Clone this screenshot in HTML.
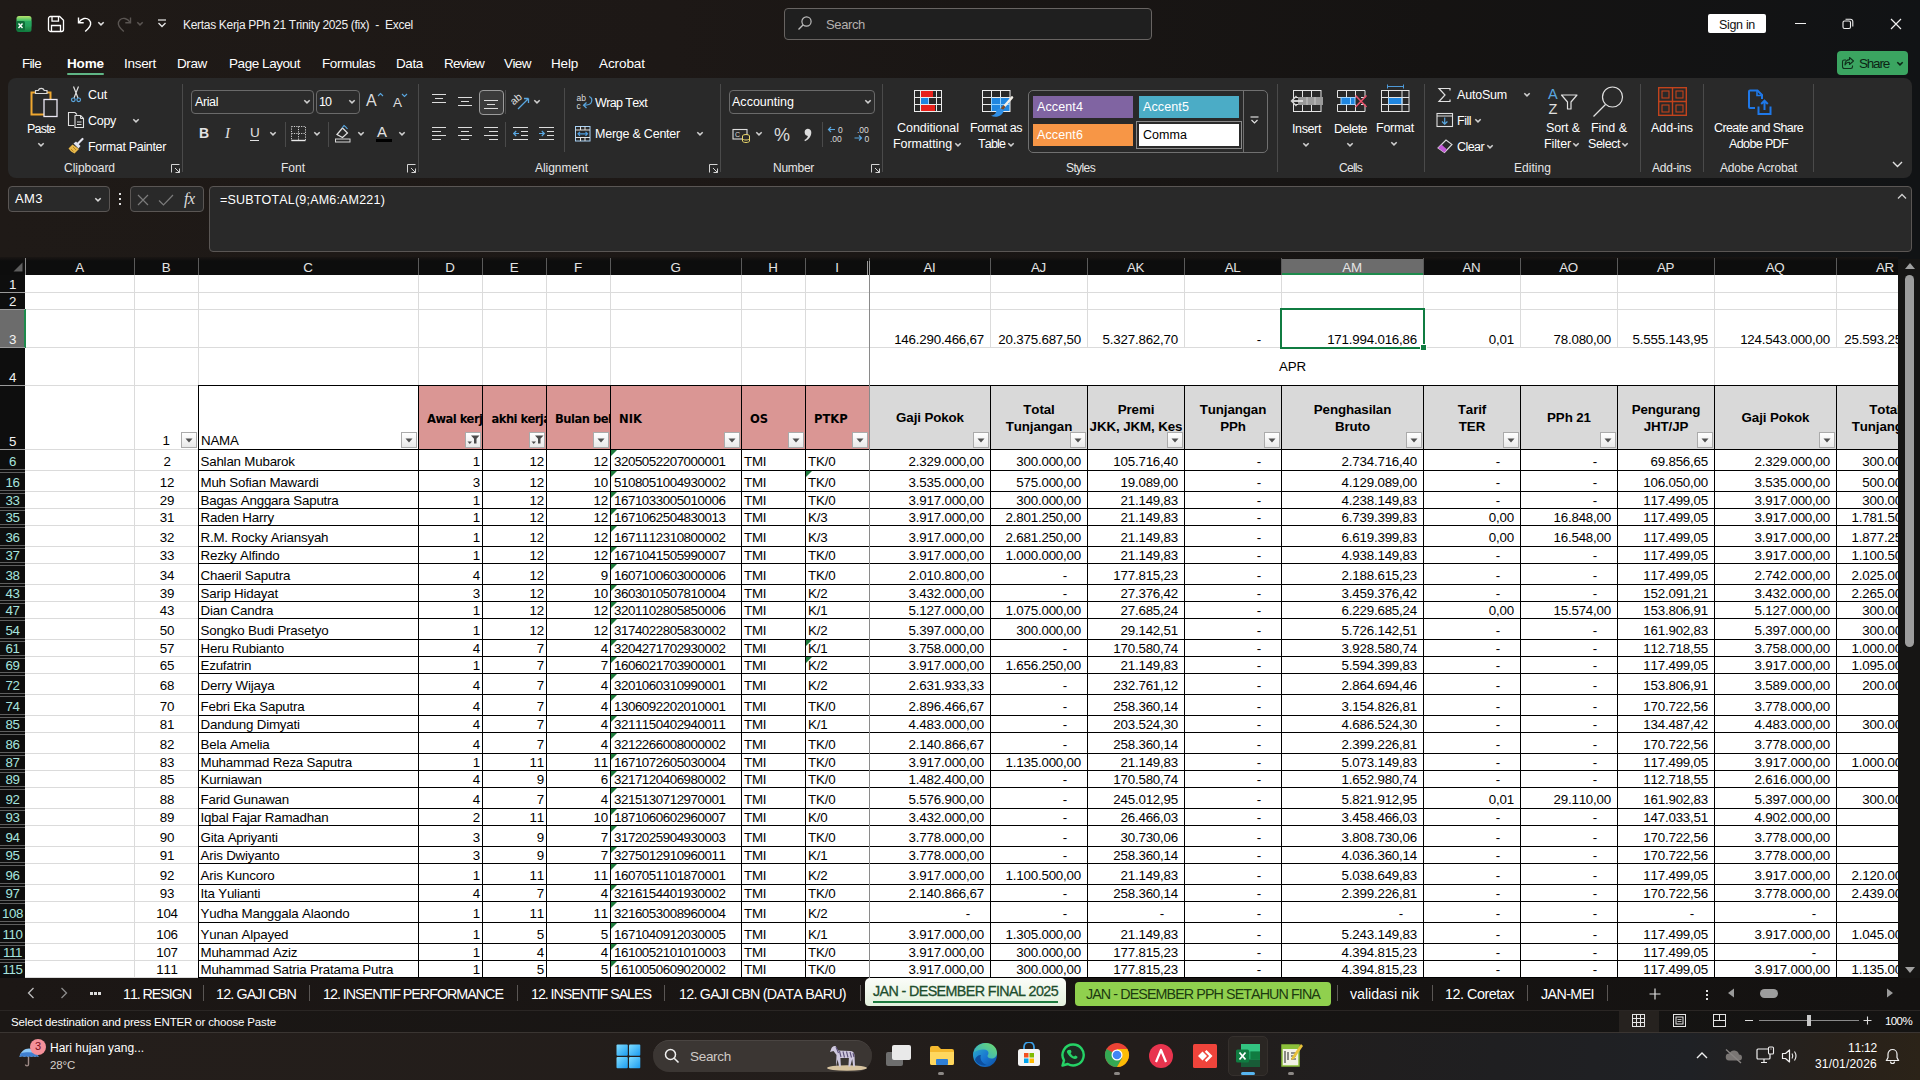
<!DOCTYPE html>
<html lang="en"><head><meta charset="utf-8"><title>Kertas Kerja PPh 21 Trinity 2025 (fix) - Excel</title>
<style>
html,body{margin:0;padding:0}
body{width:1920px;height:1080px;overflow:hidden;position:relative;background:#1a1614;font-family:"Liberation Sans",sans-serif;font-kerning:none}
.a{position:absolute;display:block}
.t{position:absolute;white-space:pre;font-family:"Liberation Sans",sans-serif}

#titlebg{position:absolute;left:0;top:0;width:1920px;height:275px;background:linear-gradient(90deg,#1f1a17 0%,#1d1816 35%,#151312 75%,#111315 100%)}
#ribbon{position:absolute;left:8px;top:78px;width:1904px;height:100px;background:#292929;border-radius:8px}

.ch{position:absolute;width:60px;height:16px;text-align:center;font:13.333px/16px "Liberation Sans",sans-serif;color:#e4e4e4;letter-spacing:-0.3px}
.rh{position:absolute;left:0;width:25px;height:16px;text-align:center;font:13.333px/16px "Liberation Sans",sans-serif;letter-spacing:-0.4px}
#tabbar{position:absolute;left:0;top:978px;width:1920px;height:32px;background:linear-gradient(90deg,#1c1715,#141211)}
#statusbar{position:absolute;left:0;top:1010px;width:1920px;height:22px;background:linear-gradient(90deg,#1b1715,#141312);border-top:1px solid #2a2624;box-sizing:border-box}
#taskbar{position:absolute;left:0;top:1032px;width:1920px;height:48px;background:linear-gradient(90deg,#241e1b 0%,#221d1b 60%,#1f1f21 78%,#1f2125 88%,#28211a 96%,#2b2318 100%);border-top:1px solid #3a3532;box-sizing:border-box}

#grid{position:absolute;left:0;top:0;width:1898px;height:978px;overflow:hidden;clip-path:inset(275px 0 0 25px);}
#gridbg{position:absolute;left:25px;top:275px;width:1873px;height:703px;background:#fff}
#grid i{position:absolute;display:block}
#grid .h{height:1px;background:#dbdbdb}
#grid .v{width:1px;background:#dbdbdb}
#grid .hb{height:1px;background:#000}
#grid .vb{width:1px;background:#000}
#grid .fz{width:1px;background:#8a8a8a}
#grid .c{position:absolute;white-space:nowrap;font:13.333px "Liberation Sans",sans-serif;color:#000;letter-spacing:-0.2px;font-kerning:none}
#grid .ctr{text-align:center}
#grid .r{text-align:right}
#grid .nik{letter-spacing:-0.45px}
#grid .hp{font:700 12.8px "DejaVu Sans Condensed","DejaVu Sans",sans-serif;letter-spacing:0;overflow:hidden;box-sizing:border-box}
#grid .hg{font-weight:700;text-align:center;letter-spacing:-0.1px;white-space:nowrap;overflow:hidden}
#grid .tri{width:0;height:0;border-top:6px solid #1e7a3c;border-right:6px solid transparent}
#grid .fb{position:absolute;width:14px;height:14px;border:1px solid #ababab;background:linear-gradient(#fff,#e9e9e9);display:block;line-height:0}
#grid .fb svg{position:absolute;left:-1px;top:-1px}
#sel{position:absolute;left:1280px;top:308px;width:141px;height:37px;border:2px solid #107c41}
#selh{left:1420px;top:344px;width:5px;height:5px;background:#107c41;border:1px solid #fff}
</style></head>
<body>
<div id="titlebg"></div>
<svg class="a" style="left:15px;top:15px" width="18" height="18" viewBox="0 0 18 18"><defs><linearGradient id="xg" x1="0" y1="0" x2="0" y2="1"><stop offset="0" stop-color="#b9e36c"/><stop offset=".3" stop-color="#3fc06a"/><stop offset="1" stop-color="#0f7a3e"/></linearGradient></defs><rect x="1.500" y="1" width="15" height="16" rx="2.500" fill="url(#xg)"/><rect x="9.500" y="6" width="7" height="5.500" fill="#21a35f" opacity=".7"/><rect x="1" y="6" width="9" height="9.500" rx="1.500" fill="#0e6e38"/><path d="M3.500 8.500 7.500 13M7.500 8.500 3.500 13" stroke="#fff" stroke-width="1.400"/></svg>
<svg class="a" style="left:47px;top:15px" width="18" height="18" viewBox="0 0 18 18"><path d="M1.5 3.5a2 2 0 0 1 2-2h9.2l3.8 3.8v9.2a2 2 0 0 1-2 2h-11a2 2 0 0 1-2-2z" fill="none" stroke="#fff" stroke-width="1.3"/><path d="M5 1.8v4.4h6.5V1.8M4.5 16v-5.5h9V16" fill="none" stroke="#fff" stroke-width="1.3"/></svg>
<svg class="a" style="left:76px;top:15px" width="18" height="18" viewBox="0 0 18 18"><path d="M2.5 2.5v5.2h5.2" fill="none" stroke="#fff" stroke-width="1.4"/><path d="M2.8 7.5C5.5 3 10.5 2.3 13.2 5c2.6 2.7 1.5 6.3-1.2 8.8l-2.8 2.6" fill="none" stroke="#fff" stroke-width="1.4"/></svg>
<svg class="a" style="left:97px;top:21px" width="8" height="6" viewBox="0 0 8 6"><path d="M1.3 1.2 4 3.900 6.700 1.2" fill="none" stroke="#e0e0e0" stroke-width="1.5"/></svg>
<svg class="a" style="left:115px;top:15px" width="18" height="18" viewBox="0 0 18 18"><path d="M15.5 2.5v5.2h-5.2" fill="none" stroke="#5a5552" stroke-width="1.4"/><path d="M15.2 7.5C12.5 3 7.5 2.3 4.8 5c-2.6 2.7-1.5 6.3 1.2 8.8l2.8 2.6" fill="none" stroke="#5a5552" stroke-width="1.4"/></svg>
<svg class="a" style="left:136px;top:21px" width="8" height="6" viewBox="0 0 8 6"><path d="M1.3 1.2 4 3.900 6.700 1.2" fill="none" stroke="#5a5552" stroke-width="1.5"/></svg>
<svg class="a" style="left:157px;top:19px" width="10" height="10" viewBox="0 0 10 10"><path d="M1 1h8" stroke="#e8e8e8" stroke-width="1.2"/><path d="M1.5 4 5 7.5 8.5 4" fill="none" stroke="#e8e8e8" stroke-width="1.3"/></svg>
<div class="t" style="left:183px;top:17.0px;font-size:12px;line-height:17px;color:#f0f0f0;letter-spacing:-0.31px;">Kertas Kerja PPh 21 Trinity 2025 (fix)  -  Excel</div>
<div class="a" style="left:784px;top:8px;width:366px;height:30px;border:1px solid #686462;border-radius:4px;background:#1f1f1f"></div>
<svg class="a" style="left:797px;top:15px" width="16" height="16" viewBox="0 0 16 16"><circle cx="9.5" cy="6.5" r="4.6" fill="none" stroke="#bdbdbd" stroke-width="1.2"/><path d="M6.2 9.8 1.5 14.5" stroke="#bdbdbd" stroke-width="1.3"/></svg>
<div class="t" style="left:826px;top:15.5px;font-size:13px;line-height:18px;color:#b4b0ae;letter-spacing:-0.37px;">Search</div>
<div class="a" style="left:1708px;top:14px;width:58px;height:19px;background:#fff;border-radius:2px"></div>
<div class="t" style="left:1719px;top:15.5px;font-size:12.5px;line-height:18px;color:#111;letter-spacing:-0.32px;">Sign in</div>
<i class="a" style="left:1795px;top:23px;width:11px;height:1px;background:#f0f0f0"></i>
<svg class="a" style="left:1842px;top:18px" width="12" height="12" viewBox="0 0 12 12"><rect x="1" y="3" width="7.5" height="7.5" rx="1.5" fill="none" stroke="#f0f0f0" stroke-width="1.1"/><path d="M3.5 1.2h5a2.3 2.3 0 0 1 2.3 2.3v5" fill="none" stroke="#f0f0f0" stroke-width="1.1"/></svg>
<svg class="a" style="left:1890px;top:18px" width="12" height="12" viewBox="0 0 12 12"><path d="M1 1 11 11M11 1 1 11" stroke="#f0f0f0" stroke-width="1.2"/></svg>
<div class="t" style="left:22px;top:53.5px;font-size:13.5px;line-height:19px;color:#ffffff;letter-spacing:-0.69px;">File</div>
<div class="t" style="left:67px;top:53.5px;font-size:13.5px;line-height:19px;color:#ffffff;letter-spacing:-0.13px;font-weight:700;">Home</div>
<div class="t" style="left:124px;top:53.5px;font-size:13.5px;line-height:19px;color:#ffffff;letter-spacing:-0.29px;">Insert</div>
<div class="t" style="left:177px;top:53.5px;font-size:13.5px;line-height:19px;color:#ffffff;letter-spacing:-0.38px;">Draw</div>
<div class="t" style="left:229px;top:53.5px;font-size:13.5px;line-height:19px;color:#ffffff;letter-spacing:-0.44px;">Page Layout</div>
<div class="t" style="left:322px;top:53.5px;font-size:13.5px;line-height:19px;color:#ffffff;letter-spacing:-0.41px;">Formulas</div>
<div class="t" style="left:396px;top:53.5px;font-size:13.5px;line-height:19px;color:#ffffff;letter-spacing:-0.38px;">Data</div>
<div class="t" style="left:444px;top:53.5px;font-size:13.5px;line-height:19px;color:#ffffff;letter-spacing:-0.71px;">Review</div>
<div class="t" style="left:504px;top:53.5px;font-size:13.5px;line-height:19px;color:#ffffff;letter-spacing:-0.57px;">View</div>
<div class="t" style="left:551px;top:53.5px;font-size:13.5px;line-height:19px;color:#ffffff;letter-spacing:-0.19px;">Help</div>
<div class="t" style="left:599px;top:53.5px;font-size:13.5px;line-height:19px;color:#ffffff;letter-spacing:-0.08px;">Acrobat</div>
<i class="a" style="left:67px;top:73px;width:37px;height:2px;background:#5fb585;border-radius:1px"></i>
<div class="a" style="left:1837px;top:51px;width:71px;height:24px;background:#3ba561;border-radius:4px"></div>
<svg class="a" style="left:1841px;top:56px" width="14" height="14" viewBox="0 0 14 14"><path d="M5 4H3.2A1.7 1.7 0 0 0 1.5 5.7v5.1a1.7 1.7 0 0 0 1.7 1.7h6.6a1.7 1.7 0 0 0 1.7-1.7V9.5" fill="none" stroke="#10301c" stroke-width="1.1"/><path d="M8.5 1.5 12.5 5l-4 3.5V6.3C6 6.3 4.8 7.2 4 9c0-3 1.6-5.2 4.5-5.4z" fill="none" stroke="#10301c" stroke-width="1.1" stroke-linejoin="round"/></svg>
<div class="t" style="left:1859px;top:53.5px;font-size:13.5px;line-height:19px;color:#0c2415;letter-spacing:-1.20px;">Share</div>
<svg class="a" style="left:1896px;top:61px" width="8" height="6" viewBox="0 0 8 6"><path d="M1.3 1.2 4 3.900 6.700 1.2" fill="none" stroke="#0c2415" stroke-width="1.5"/></svg>
<div id="ribbon"></div>
<svg class="a" style="left:27px;top:86px" width="32" height="34" viewBox="0 0 32 34"><path d="M17 28.500H4.500V6.500H23.500V13.500" fill="none" stroke="#f0a830" stroke-width="2"/><path d="M8.500 7.500V4.500h2.700a3.300 3.300 0 0 1 6.100 0H20v3z" fill="#292929" stroke="#d8d8d8" stroke-width="1.200"/><rect x="17" y="13.500" width="13" height="17" fill="#292929" stroke="#ece8f4" stroke-width="1.300"/></svg>
<div class="t" style="left:27px;top:119.5px;font-size:12.5px;line-height:18px;color:#ffffff;letter-spacing:-0.79px;">Paste</div>
<svg class="a" style="left:37px;top:142px" width="8" height="6" viewBox="0 0 8 6"><path d="M1.3 1.2 4 3.900 6.700 1.2" fill="none" stroke="#d0d0d0" stroke-width="1.5"/></svg>
<svg class="a" style="left:69px;top:86px" width="14" height="17" viewBox="0 0 14 17"><path d="M4.500 .500 9 12M9.500 .500 5 12" stroke="#e0e0e0" stroke-width="1.200" fill="none"/><circle cx="4.300" cy="13.800" r="1.800" fill="none" stroke="#5aa7e0" stroke-width="1.200"/><circle cx="9.700" cy="13.800" r="1.800" fill="none" stroke="#5aa7e0" stroke-width="1.200"/></svg>
<div class="t" style="left:88px;top:85.5px;font-size:12.5px;line-height:18px;color:#ffffff;letter-spacing:-0.15px;">Cut</div>
<svg class="a" style="left:67px;top:111px" width="18" height="18" viewBox="0 0 18 18"><path d="M7 14.500H1.500V1.500h6.500l2 2" fill="none" stroke="#e0e0e0" stroke-width="1.100"/><path d="M8 4.500h5.500l3 3V16.500H8z" fill="#292929" stroke="#e0e0e0" stroke-width="1.100" stroke-linejoin="round"/><path d="M13.500 4.500v3h3" fill="none" stroke="#e0e0e0" stroke-width="1"/><path d="M10 11h4.500M10 13.500h4.500" stroke="#e0e0e0" stroke-width="1"/></svg>
<div class="t" style="left:88px;top:112.0px;font-size:12.5px;line-height:18px;color:#ffffff;letter-spacing:-0.30px;">Copy</div>
<svg class="a" style="left:132px;top:117.5px" width="8" height="6" viewBox="0 0 8 6"><path d="M1.3 1.2 4 3.900 6.700 1.2" fill="none" stroke="#d0d0d0" stroke-width="1.5"/></svg>
<svg class="a" style="left:67px;top:137px" width="18" height="18" viewBox="0 0 18 18"><path d="M11 6.500 15.500 2" stroke="#e4e4ee" stroke-width="2.200" stroke-linecap="round"/><path d="M6.500 6.500l2.500-2 4.500 4.500-2 2.500z" fill="#dfe3f0"/><path d="M5.500 7.500 1.500 11.500c1.500 2 3.500 4 6 5L12 12z" fill="#e8b84a"/><path d="M4 12l2.500 2.500M6 10l3 3" stroke="#a87818" stroke-width=".8"/></svg>
<div class="t" style="left:88px;top:137.5px;font-size:12.5px;line-height:18px;color:#ffffff;letter-spacing:-0.33px;">Format Painter</div>
<div class="t" style="left:64px;top:159.5px;font-size:12px;line-height:17px;color:#e6e6e6;letter-spacing:-0.04px;">Clipboard</div>
<svg class="a" style="left:171px;top:164px" width="9" height="9" viewBox="0 0 9 9"><path d="M0.5 8.500V0.5H8.500M4 4 8.500 8.500M8.500 4.500V8.500H4.500" fill="none" stroke="#d4d4d4" stroke-width="1"/></svg>
<i class="a" style="left:182px;top:84px;width:1px;height:88px;background:#4a4a4a"></i>
<div class="a" style="left:191px;top:90px;width:121px;height:22px;border:1px solid #6a6a6a;border-radius:4px;background:#2b2b2b"></div>
<div class="t" style="left:195px;top:92.5px;font-size:12.5px;line-height:18px;color:#ffffff;letter-spacing:-0.40px;">Arial</div>
<svg class="a" style="left:303px;top:99px" width="8" height="6" viewBox="0 0 8 6"><path d="M1.3 1.2 4 3.900 6.700 1.2" fill="none" stroke="#d0d0d0" stroke-width="1.5"/></svg>
<div class="a" style="left:316px;top:90px;width:42px;height:22px;border:1px solid #6a6a6a;border-radius:4px;background:#2b2b2b"></div>
<div class="t" style="left:319px;top:92.5px;font-size:12.5px;line-height:18px;color:#ffffff;letter-spacing:-0.95px;">10</div>
<svg class="a" style="left:348px;top:99px" width="8" height="6" viewBox="0 0 8 6"><path d="M1.3 1.2 4 3.900 6.700 1.2" fill="none" stroke="#d0d0d0" stroke-width="1.5"/></svg>
<div class="t" style="left:366px;top:90.0px;font-size:16px;line-height:22px;color:#dcdcdc;letter-spacing:0.33px;">A</div>
<svg class="a" style="left:377px;top:92px" width="7" height="5" viewBox="0 0 7 5"><path d="M1 4 3.5 1.5 6 4" fill="none" stroke="#5aa7e0" stroke-width="1.1"/></svg>
<div class="t" style="left:393px;top:92.5px;font-size:13.5px;line-height:19px;color:#dcdcdc;letter-spacing:-0.00px;">A</div>
<svg class="a" style="left:401px;top:93px" width="7" height="5" viewBox="0 0 7 5"><path d="M1 1 3.5 3.5 6 1" fill="none" stroke="#5aa7e0" stroke-width="1.1"/></svg>
<div class="t" style="left:199px;top:123.0px;font-size:14px;line-height:20px;color:#e2e2e2;letter-spacing:-1.11px;font-weight:700;">B</div>
<div class="t" style="left:225px;top:123px;font:italic 15px/20px 'Liberation Serif',serif;color:#e2e2e2">I</div>
<div class="t" style="left:250px;top:123.0px;font-size:13.5px;line-height:19px;color:#e2e2e2;letter-spacing:-0.75px;">U</div>
<i class="a" style="left:250px;top:140px;width:9px;height:1px;background:#e2e2e2"></i>
<svg class="a" style="left:269px;top:131px" width="8" height="6" viewBox="0 0 8 6"><path d="M1.3 1.2 4 3.900 6.700 1.2" fill="none" stroke="#d0d0d0" stroke-width="1.5"/></svg>
<i class="a" style="left:285px;top:122px;width:1px;height:25px;background:#4a4a4a"></i>
<svg class="a" style="left:290px;top:125px" width="17" height="17" viewBox="0 0 17 17"><path d="M1.5 1.5h14v14h-14z" fill="none" stroke="#d0d0d0" stroke-width="1" stroke-dasharray="1.2 1.2"/><path d="M8.5 1.5v14M1.5 8.5h14" stroke="#d0d0d0" stroke-width="1" stroke-dasharray="1.2 1.2"/><path d="M1.5 15.5h14" stroke="#e8e8e8" stroke-width="1.4"/></svg>
<svg class="a" style="left:313px;top:131px" width="8" height="6" viewBox="0 0 8 6"><path d="M1.3 1.2 4 3.900 6.700 1.2" fill="none" stroke="#d0d0d0" stroke-width="1.5"/></svg>
<i class="a" style="left:328px;top:122px;width:1px;height:25px;background:#4a4a4a"></i>
<svg class="a" style="left:334px;top:124px" width="18" height="19" viewBox="0 0 18 19"><path d="M3 10.5 8.5 4l5 5-5 4.5z" fill="none" stroke="#e0e0e0" stroke-width="1.2"/><path d="M8 4 10 1.5c1.5 1 2.5 2 3.5 3.5" fill="none" stroke="#5aa7e0" stroke-width="1.1"/><rect x="1.5" y="15" width="14.5" height="3" fill="none" stroke="#d8d8d8" stroke-width="1"/></svg>
<svg class="a" style="left:357px;top:131px" width="8" height="6" viewBox="0 0 8 6"><path d="M1.3 1.2 4 3.900 6.700 1.2" fill="none" stroke="#d0d0d0" stroke-width="1.5"/></svg>
<div class="t" style="left:377px;top:120.5px;font-size:15px;line-height:21px;color:#e2e2e2;letter-spacing:1.20px;">A</div>
<i class="a" style="left:376px;top:139px;width:16px;height:3px;background:#000"></i>
<svg class="a" style="left:398px;top:131px" width="8" height="6" viewBox="0 0 8 6"><path d="M1.3 1.2 4 3.900 6.700 1.2" fill="none" stroke="#d0d0d0" stroke-width="1.5"/></svg>
<div class="t" style="left:281px;top:159.5px;font-size:12px;line-height:17px;color:#e6e6e6;letter-spacing:-0.00px;">Font</div>
<svg class="a" style="left:407px;top:164px" width="9" height="9" viewBox="0 0 9 9"><path d="M0.5 8.500V0.5H8.500M4 4 8.500 8.500M8.500 4.500V8.500H4.500" fill="none" stroke="#d4d4d4" stroke-width="1"/></svg>
<i class="a" style="left:418px;top:84px;width:1px;height:88px;background:#4a4a4a"></i>
<svg class="a" style="left:432px;top:94px" width="14" height="13" viewBox="0 0 14 13"><rect x="0.0" y="0.00" width="14" height="1" fill="#dcdcdc"/><rect x="3.0" y="4.00" width="8" height="1" fill="#dcdcdc"/><rect x="0.0" y="8.00" width="14" height="1" fill="#dcdcdc"/></svg>
<svg class="a" style="left:458px;top:97px" width="14" height="13" viewBox="0 0 14 13"><rect x="0.0" y="0.00" width="14" height="1" fill="#dcdcdc"/><rect x="3.0" y="4.00" width="8" height="1" fill="#dcdcdc"/><rect x="0.0" y="8.00" width="14" height="1" fill="#dcdcdc"/></svg>
<div class="a" style="left:479px;top:90px;width:23px;height:23px;border:1px solid #9b9b9b;border-radius:4px;background:#3b3b3b"></div>
<svg class="a" style="left:484px;top:100px" width="14" height="13" viewBox="0 0 14 13"><rect x="0.0" y="0.00" width="14" height="1" fill="#dcdcdc"/><rect x="3.0" y="4.00" width="8" height="1" fill="#dcdcdc"/><rect x="0.0" y="8.00" width="14" height="1" fill="#dcdcdc"/></svg>
<i class="a" style="left:505px;top:90px;width:1px;height:24px;background:#4a4a4a"></i>
<svg class="a" style="left:511px;top:91px" width="20" height="20" viewBox="0 0 20 20"><text x="0" y="11" font-size="10.500" fill="#e0e0e0" font-family="Liberation Sans,sans-serif" transform="rotate(-40 6 9)">ab</text><path d="M7 18 17.500 7.500M17.500 7.500h-4.500M17.500 7.500v4.500" fill="none" stroke="#5aa7e0" stroke-width="1.300"/></svg>
<svg class="a" style="left:533px;top:99px" width="8" height="6" viewBox="0 0 8 6"><path d="M1.3 1.2 4 3.900 6.700 1.2" fill="none" stroke="#d0d0d0" stroke-width="1.5"/></svg>
<i class="a" style="left:564px;top:88px;width:1px;height:64px;background:#4a4a4a"></i>
<svg class="a" style="left:576px;top:93px" width="17" height="18" viewBox="0 0 17 18"><text x="0.5" y="7.5" font-size="8.5" fill="#dcdcdc" font-family="Liberation Sans,sans-serif">ab</text><text x="0.5" y="15.5" font-size="8.5" fill="#dcdcdc" font-family="Liberation Sans,sans-serif">c</text><path d="M13 3.5c3 .5 3.5 4 2 6.5-1 1.700-3 2.200-7 2.200M10.500 9.500 7.500 12.200l3 2.800" fill="none" stroke="#5aa7e0" stroke-width="1.2"/></svg>
<div class="t" style="left:595px;top:93.5px;font-size:12.5px;line-height:18px;color:#ffffff;letter-spacing:-0.63px;">Wrap Text</div>
<svg class="a" style="left:432px;top:127px" width="14" height="17" viewBox="0 0 14 17"><rect x="0" y="0.00" width="14" height="1" fill="#dcdcdc"/><rect x="0" y="4.00" width="9" height="1" fill="#dcdcdc"/><rect x="0" y="8.00" width="14" height="1" fill="#dcdcdc"/><rect x="0" y="12.00" width="9" height="1" fill="#dcdcdc"/></svg>
<svg class="a" style="left:458px;top:127px" width="14" height="17" viewBox="0 0 14 17"><rect x="0.0" y="0.00" width="14" height="1" fill="#dcdcdc"/><rect x="3.0" y="4.00" width="8" height="1" fill="#dcdcdc"/><rect x="0.0" y="8.00" width="14" height="1" fill="#dcdcdc"/><rect x="3.0" y="12.00" width="8" height="1" fill="#dcdcdc"/></svg>
<svg class="a" style="left:484px;top:127px" width="14" height="17" viewBox="0 0 14 17"><rect x="0" y="0.00" width="14" height="1" fill="#dcdcdc"/><rect x="5" y="4.00" width="9" height="1" fill="#dcdcdc"/><rect x="0" y="8.00" width="14" height="1" fill="#dcdcdc"/><rect x="5" y="12.00" width="9" height="1" fill="#dcdcdc"/></svg>
<i class="a" style="left:505px;top:122px;width:1px;height:25px;background:#4a4a4a"></i>
<svg class="a" style="left:513px;top:127px" width="15" height="13" viewBox="0 0 15 13"><path d="M0 .5h15M8 4.500h7M8 8.500h7M0 12.500h15" stroke="#dcdcdc" stroke-width="1"/><path d="M6 6.500H.8M3.200 4 .700 6.500l2.500 2.500" fill="none" stroke="#5aa7e0" stroke-width="1.2"/></svg>
<svg class="a" style="left:539px;top:127px" width="15" height="13" viewBox="0 0 15 13"><path d="M0 .5h15M8 4.500h7M8 8.500h7M0 12.500h15" stroke="#dcdcdc" stroke-width="1"/><path d="M0 6.500h5.200M2.800 4l2.500 2.500-2.500 2.500" fill="none" stroke="#5aa7e0" stroke-width="1.2"/></svg>
<svg class="a" style="left:575px;top:126px" width="16" height="16" viewBox="0 0 16 16"><rect x=".5" y=".5" width="14.500" height="14.500" fill="none" stroke="#a9d2f5" stroke-width="1"/><path d="M.500 4h14.500M.500 11.500h14.500M5.500 .500V4M10 .500V4M5.500 11.500V15M10 11.500V15" stroke="#e4e4e4" stroke-width="1"/><path d="M3 7.800h9.500M5 5.800l-2 2 2 2M10.500 5.800l2 2-2 2" fill="none" stroke="#4f9ee0" stroke-width="1.200"/></svg>
<div class="t" style="left:595px;top:125.0px;font-size:12.5px;line-height:18px;color:#ffffff;letter-spacing:-0.23px;">Merge &amp; Center</div>
<svg class="a" style="left:696px;top:131px" width="8" height="6" viewBox="0 0 8 6"><path d="M1.3 1.2 4 3.900 6.700 1.2" fill="none" stroke="#d0d0d0" stroke-width="1.5"/></svg>
<div class="t" style="left:535px;top:159.5px;font-size:12px;line-height:17px;color:#e6e6e6;letter-spacing:-0.04px;">Alignment</div>
<svg class="a" style="left:709px;top:164px" width="9" height="9" viewBox="0 0 9 9"><path d="M0.5 8.500V0.5H8.500M4 4 8.500 8.500M8.500 4.500V8.500H4.500" fill="none" stroke="#d4d4d4" stroke-width="1"/></svg>
<i class="a" style="left:720px;top:84px;width:1px;height:88px;background:#4a4a4a"></i>
<div class="a" style="left:729px;top:90px;width:144px;height:22px;border:1px solid #6a6a6a;border-radius:4px;background:#2b2b2b"></div>
<div class="t" style="left:732px;top:92.5px;font-size:12.5px;line-height:18px;color:#ffffff;letter-spacing:0.02px;">Accounting</div>
<svg class="a" style="left:864px;top:99px" width="8" height="6" viewBox="0 0 8 6"><path d="M1.3 1.2 4 3.900 6.700 1.2" fill="none" stroke="#d0d0d0" stroke-width="1.5"/></svg>
<svg class="a" style="left:732px;top:127.5px" width="20" height="16" viewBox="0 0 20 16"><rect x="1" y="1.500" width="14" height="9.500" fill="none" stroke="#dcdcdc" stroke-width="1.100"/><text x="3" y="9" font-size="7" fill="#dcdcdc" font-family="Liberation Sans,sans-serif">C</text><ellipse cx="14" cy="8" rx="3.500" ry="1.500" fill="#292929" stroke="#e9d66b" stroke-width="1"/><path d="M10.500 8v5c0 .800 1.600 1.500 3.500 1.500s3.500-.700 3.500-1.500V8" fill="#292929" stroke="#e9d66b" stroke-width="1"/><path d="M10.500 10.500c0 .800 1.600 1.500 3.500 1.500s3.500-.700 3.500-1.500" fill="none" stroke="#e9d66b" stroke-width="1"/></svg>
<svg class="a" style="left:755px;top:131px" width="8" height="6" viewBox="0 0 8 6"><path d="M1.3 1.2 4 3.900 6.700 1.2" fill="none" stroke="#d0d0d0" stroke-width="1.5"/></svg>
<div class="t" style="left:774px;top:122.5px;font-size:18px;line-height:25px;color:#dcdcdc;letter-spacing:-0.00px;">%</div>
<svg class="a" style="left:802px;top:127.5px" width="12" height="16" viewBox="0 0 12 16"><path d="M5.500 .800a3.600 3.600 0 0 1 3.800 3.800c0 4-2.600 7.200-6.300 8.600l-.600-1.300c2-.900 3.200-2.300 3.500-4a3.600 3.600 0 0 1-.400-7.100z" fill="#dcdcdc"/></svg>
<i class="a" style="left:822px;top:122px;width:1px;height:25px;background:#4a4a4a"></i>
<svg class="a" style="left:827px;top:125px" width="20" height="18" viewBox="0 0 20 18"><path d="M8 4.500H1.500M4 2 1.500 4.500 4 7" fill="none" stroke="#5aa7e0" stroke-width="1.200"/><text x="11" y="8" font-size="8.500" fill="#dcdcdc" font-family="Liberation Sans,sans-serif">0</text><text x="3" y="16.500" font-size="8.500" fill="#dcdcdc" font-family="Liberation Sans,sans-serif">.00</text></svg>
<svg class="a" style="left:853px;top:125px" width="20" height="18" viewBox="0 0 20 18"><text x="4" y="8" font-size="8.500" fill="#dcdcdc" font-family="Liberation Sans,sans-serif">.00</text><path d="M1.500 13h7M6 10.500 8.500 13 6 15.500" fill="none" stroke="#5aa7e0" stroke-width="1.200"/><text x="11.500" y="16.500" font-size="8.500" fill="#dcdcdc" font-family="Liberation Sans,sans-serif">0</text></svg>
<div class="t" style="left:773px;top:159.5px;font-size:12px;line-height:17px;color:#e6e6e6;letter-spacing:-0.28px;">Number</div>
<svg class="a" style="left:871px;top:164px" width="9" height="9" viewBox="0 0 9 9"><path d="M0.5 8.500V0.5H8.500M4 4 8.500 8.500M8.500 4.500V8.500H4.500" fill="none" stroke="#d4d4d4" stroke-width="1"/></svg>
<i class="a" style="left:882px;top:84px;width:1px;height:88px;background:#4a4a4a"></i>
<svg class="a" style="left:914px;top:90px" width="29" height="22" viewBox="0 0 29 22"><rect x="7" y="1" width="12" height="6.5" fill="#e8211b"/><rect x="7" y="8" width="7" height="6" fill="#1f86e0"/><rect x="7" y="15" width="14" height="6" fill="#e8211b"/><rect x=".5" y=".5" width="27" height="21" fill="none" stroke="#ececec" stroke-width="1"/><path d="M.500 7.500h27M.500 14.500h27M6.500 .500v21M22.500 .500v21" stroke="#ececec" stroke-width="1"/><path d="M14.500 8v6" stroke="#9fd0ff" stroke-width="1"/></svg>
<div class="t" style="left:897px;top:118.8px;font-size:12.5px;line-height:18px;color:#ffffff;letter-spacing:-0.05px;">Conditional</div>
<div class="t" style="left:893px;top:134.8px;font-size:12.5px;line-height:18px;color:#ffffff;letter-spacing:-0.07px;">Formatting</div>
<svg class="a" style="left:954px;top:142px" width="8" height="6" viewBox="0 0 8 6"><path d="M1.3 1.2 4 3.900 6.700 1.2" fill="none" stroke="#d0d0d0" stroke-width="1.5"/></svg>
<svg class="a" style="left:982px;top:90px" width="32" height="28" viewBox="0 0 32 28"><rect x="9.500" y="7.500" width="18.500" height="14" fill="#1f86e0"/><rect x=".5" y=".5" width="27.500" height="21" fill="none" stroke="#ececec" stroke-width="1"/><path d="M.500 7.500h27.500M.500 14.500h27.500M9.500 .500v21M18.500 .500v21" stroke="#ececec" stroke-width="1"/><path d="M9.500 7.500v14M18.500 7.500v14M9.500 14.500h18.500" stroke="#8fd0ff" stroke-width="1"/><path d="M30 7.500 19.500 19.500" stroke="#f2efe8" stroke-width="2.600" stroke-linecap="round"/><path d="M22.500 16 19.500 19.500" stroke="#7a4a2a" stroke-width="2.800"/><path d="M20.500 19c-3.500-1.500-6 .500-6.500 3-.400 2-2.500 3.500-5 3.800 4 2 10.500 1.200 12.500-4.300z" fill="#2f8fe6"/></svg>
<div class="t" style="left:970px;top:118.8px;font-size:12.5px;line-height:18px;color:#ffffff;letter-spacing:-0.47px;">Format as</div>
<div class="t" style="left:978px;top:134.8px;font-size:12.5px;line-height:18px;color:#ffffff;letter-spacing:-0.85px;">Table</div>
<svg class="a" style="left:1007px;top:142px" width="8" height="6" viewBox="0 0 8 6"><path d="M1.3 1.2 4 3.900 6.700 1.2" fill="none" stroke="#d0d0d0" stroke-width="1.5"/></svg>
<div class="a" style="left:1028px;top:90px;width:238px;height:61px;border:1px solid #707070;border-radius:5px"></div>
<i class="a" style="left:1243px;top:91px;width:1px;height:61px;background:#707070"></i>
<div class="a" style="left:1033px;top:96px;width:100px;height:22px;background:#8064a2"></div>
<div class="t" style="left:1037px;top:97.5px;font-size:12.5px;line-height:18px;color:#fff;letter-spacing:0.12px;">Accent4</div>
<div class="a" style="left:1139px;top:96px;width:100px;height:22px;background:#4bacc6"></div>
<div class="t" style="left:1143px;top:97.5px;font-size:12.5px;line-height:18px;color:#fff;letter-spacing:0.12px;">Accent5</div>
<div class="a" style="left:1033px;top:124px;width:100px;height:22px;background:#f79646"></div>
<div class="t" style="left:1037px;top:125.5px;font-size:12.5px;line-height:18px;color:#fff;letter-spacing:0.12px;">Accent6</div>
<div class="a" style="left:1136px;top:121px;width:104px;height:26px;border:1px solid #8a8a8a;background:#2a2a2a"></div>
<div class="a" style="left:1139px;top:124px;width:100px;height:22px;background:#fff"></div>
<div class="t" style="left:1143px;top:125.5px;font-size:12.5px;line-height:18px;color:#000;letter-spacing:0.05px;">Comma</div>
<svg class="a" style="left:1250px;top:116px" width="9" height="9" viewBox="0 0 9 9"><path d="M.500 1h8" stroke="#e0e0e0" stroke-width="1.200"/><path d="M1.500 4 4.500 7 7.500 4" fill="none" stroke="#e0e0e0" stroke-width="1.200"/></svg>
<div class="t" style="left:1066px;top:159.5px;font-size:12px;line-height:17px;color:#e6e6e6;letter-spacing:-0.61px;">Styles</div>
<i class="a" style="left:1277px;top:84px;width:1px;height:88px;background:#4a4a4a"></i>
<svg class="a" style="left:1290px;top:90px" width="34" height="22" viewBox="0 0 34 22"><g transform="translate(3,0)"><rect x=".5" y=".5" width="27.500" height="21" fill="none" stroke="#e4e4e4" stroke-width="1"/><path d="M.500 7.500h27.500M.500 14.500h27.500M9.500 .500v21M18.500 .500v21" stroke="#e4e4e4" stroke-width="1"/></g><rect x="8" y="7" width="25" height="8" fill="#9a9a9a"/><path d="M17 7v8M25 7v8" stroke="#c8c8c8" stroke-width="1"/><path d="M13 11H2M6.500 6 1.500 11l5 5" fill="none" stroke="#cfcfcf" stroke-width="1.500"/><path d="M4 11h9" stroke="#f0f0f0" stroke-width="1"/></svg>
<div class="t" style="left:1292px;top:119.5px;font-size:12.5px;line-height:18px;color:#ffffff;letter-spacing:-0.38px;">Insert</div>
<svg class="a" style="left:1302px;top:142px" width="8" height="6" viewBox="0 0 8 6"><path d="M1.3 1.2 4 3.900 6.700 1.2" fill="none" stroke="#d0d0d0" stroke-width="1.5"/></svg>
<svg class="a" style="left:1337px;top:90px" width="32" height="22" viewBox="0 0 32 22"><path d="M.500 7.500V.500h27.500v7M.500 14.500v7h27.500v-7M9.500 .500v7M18.500 .500v7M9.500 14.500v7M18.500 14.500v7M.500 7.500h4M.500 14.500h4M24 7.500h4M24 14.500h4" fill="none" stroke="#e4e4e4" stroke-width="1"/><rect x="4" y="7.500" width="14" height="7" fill="#1f86e0" stroke="#9fd4ff" stroke-width="1"/><path d="M13.500 7.500v7" stroke="#9fd4ff" stroke-width="1"/><path d="M18.500 5.500 29.500 17M29.500 5.500 18.500 17" stroke="#e8506a" stroke-width="1.600"/></svg>
<div class="t" style="left:1334px;top:119.5px;font-size:12.5px;line-height:18px;color:#ffffff;letter-spacing:-0.52px;">Delete</div>
<svg class="a" style="left:1346px;top:142px" width="8" height="6" viewBox="0 0 8 6"><path d="M1.3 1.2 4 3.900 6.700 1.2" fill="none" stroke="#d0d0d0" stroke-width="1.5"/></svg>
<svg class="a" style="left:1381px;top:83px" width="30" height="30" viewBox="0 0 30 30"><path d="M6.500 3.500h16M6.500 1.500v4M22.500 1.500v4" stroke="#4f9ad8" stroke-width="1"/><g transform="translate(0,7)"><rect x="7.500" y="7.500" width="13.500" height="7" fill="#1f86e0"/><rect x=".5" y=".5" width="27.500" height="21" fill="none" stroke="#e4e4e4" stroke-width="1"/><path d="M.500 7.500h27.500M.500 14.500h27.500M7.500 .500v21M21 .500v21" stroke="#e4e4e4" stroke-width="1"/><path d="M7.500 7.500v7M21 7.500v7" stroke="#9fd4ff" stroke-width="1"/></g></svg>
<div class="t" style="left:1376px;top:119.0px;font-size:12.5px;line-height:18px;color:#ffffff;letter-spacing:-0.26px;">Format</div>
<svg class="a" style="left:1390px;top:141px" width="8" height="6" viewBox="0 0 8 6"><path d="M1.3 1.2 4 3.900 6.700 1.2" fill="none" stroke="#d0d0d0" stroke-width="1.5"/></svg>
<div class="t" style="left:1339px;top:159.5px;font-size:12px;line-height:17px;color:#e6e6e6;letter-spacing:-0.73px;">Cells</div>
<i class="a" style="left:1424px;top:84px;width:1px;height:88px;background:#4a4a4a"></i>
<svg class="a" style="left:1437px;top:87px" width="15" height="16" viewBox="0 0 15 16"><path d="M13 3.500V1.500H2L8 8 2 14.500h11v-2" fill="none" stroke="#e0e0e0" stroke-width="1.200"/></svg>
<div class="t" style="left:1457px;top:85.5px;font-size:12.5px;line-height:18px;color:#ffffff;letter-spacing:-0.20px;">AutoSum</div>
<svg class="a" style="left:1523px;top:91.5px" width="8" height="6" viewBox="0 0 8 6"><path d="M1.3 1.2 4 3.900 6.700 1.2" fill="none" stroke="#d0d0d0" stroke-width="1.5"/></svg>
<svg class="a" style="left:1436px;top:112px" width="18" height="16" viewBox="0 0 18 16"><rect x="1" y="1.500" width="15.500" height="13" fill="none" stroke="#e0e0e0" stroke-width="1.100"/><path d="M1 4h15.500" stroke="#e0e0e0" stroke-width="1"/><path d="M8.700 5.500v6.500M6 9.500l2.700 2.700 2.700-2.700" fill="none" stroke="#5aa7e0" stroke-width="1.200"/></svg>
<div class="t" style="left:1457px;top:111.5px;font-size:12.5px;line-height:18px;color:#ffffff;letter-spacing:-0.49px;">Fill</div>
<svg class="a" style="left:1474px;top:118px" width="8" height="6" viewBox="0 0 8 6"><path d="M1.3 1.2 4 3.900 6.700 1.2" fill="none" stroke="#d0d0d0" stroke-width="1.5"/></svg>
<svg class="a" style="left:1436px;top:137px" width="18" height="18" viewBox="0 0 18 18"><path d="M2 11 10 3l6 4.500-7.500 8z" fill="none" stroke="#dcdcdc" stroke-width="1.100"/><path d="M2 11l3.500-3.500 5.500 5L8.500 15.500z" fill="#c259d6"/></svg>
<div class="t" style="left:1457px;top:137.5px;font-size:12.5px;line-height:18px;color:#ffffff;letter-spacing:-0.57px;">Clear</div>
<svg class="a" style="left:1486px;top:144px" width="8" height="6" viewBox="0 0 8 6"><path d="M1.3 1.2 4 3.900 6.700 1.2" fill="none" stroke="#d0d0d0" stroke-width="1.5"/></svg>
<svg class="a" style="left:1547px;top:86px" width="34" height="30" viewBox="0 0 34 30"><text x="1" y="13" font-size="14.500" fill="#5aa7e0" font-family="Liberation Sans,sans-serif">A</text><text x="1.500" y="27.700" font-size="14.500" fill="#e0e0e0" font-family="Liberation Sans,sans-serif">Z</text><path d="M14.500 9h15.500l-6 7v7h-3.500v-7z" fill="none" stroke="#e0e0e0" stroke-width="1.200" stroke-linejoin="round"/></svg>
<div class="t" style="left:1546px;top:118.8px;font-size:12.5px;line-height:18px;color:#ffffff;letter-spacing:-0.12px;">Sort &amp;</div>
<div class="t" style="left:1544px;top:134.8px;font-size:12.5px;line-height:18px;color:#ffffff;letter-spacing:-0.13px;">Filter</div>
<svg class="a" style="left:1572px;top:142px" width="8" height="6" viewBox="0 0 8 6"><path d="M1.3 1.2 4 3.900 6.700 1.2" fill="none" stroke="#d0d0d0" stroke-width="1.5"/></svg>
<svg class="a" style="left:1592px;top:86px" width="34" height="32" viewBox="0 0 34 32"><circle cx="20.500" cy="11" r="10" fill="none" stroke="#e0e0e0" stroke-width="1.200"/><path d="M13.500 18.500 1.500 30.500" stroke="#e0e0e0" stroke-width="1.300"/></svg>
<div class="t" style="left:1591px;top:118.8px;font-size:12.5px;line-height:18px;color:#ffffff;letter-spacing:-0.02px;">Find &amp;</div>
<div class="t" style="left:1588px;top:134.8px;font-size:12.5px;line-height:18px;color:#ffffff;letter-spacing:-0.46px;">Select</div>
<svg class="a" style="left:1621px;top:142px" width="8" height="6" viewBox="0 0 8 6"><path d="M1.3 1.2 4 3.900 6.700 1.2" fill="none" stroke="#d0d0d0" stroke-width="1.5"/></svg>
<div class="t" style="left:1514px;top:159.5px;font-size:12px;line-height:17px;color:#e6e6e6;letter-spacing:0.04px;">Editing</div>
<i class="a" style="left:1640px;top:84px;width:1px;height:88px;background:#4a4a4a"></i>
<svg class="a" style="left:1658px;top:87px" width="29" height="29" viewBox="0 0 29 29"><rect x=".7" y=".7" width="27.600" height="27.600" fill="none" stroke="#c2431c" stroke-width="1.400"/><path d="M14.500 .700v27.600M.700 14.500h27.600" stroke="#c2431c" stroke-width="1.400"/><rect x="4" y="4" width="7" height="7" fill="none" stroke="#c2431c" stroke-width="1.100"/><rect x="18" y="4" width="7" height="7" fill="none" stroke="#c2431c" stroke-width="1.100"/><rect x="4" y="18" width="7" height="7" fill="none" stroke="#c2431c" stroke-width="1.100"/><rect x="18" y="18" width="7" height="7" fill="none" stroke="#c2431c" stroke-width="1.100"/></svg>
<div class="t" style="left:1651px;top:118.8px;font-size:12.5px;line-height:18px;color:#ffffff;letter-spacing:-0.05px;">Add-ins</div>
<div class="t" style="left:1652px;top:159.5px;font-size:12px;line-height:17px;color:#e6e6e6;letter-spacing:-0.24px;">Add-ins</div>
<i class="a" style="left:1703px;top:84px;width:1px;height:88px;background:#4a4a4a"></i>
<svg class="a" style="left:1746px;top:89px" width="28" height="28" viewBox="0 0 28 28"><path d="M3 2.500a1 1 0 0 1 1-1h7.500L16 6v4M3 2.500V18a1 1 0 0 0 1 1h5" fill="none" stroke="#1f78e8" stroke-width="2"/><path d="M11 1.500V6.500h5" fill="none" stroke="#1f78e8" stroke-width="1.600"/><path d="M12.500 17.500V25h12v-7.500" fill="none" stroke="#1f78e8" stroke-width="2"/><path d="M18.500 21V12M15.200 15l3.300-3.300 3.300 3.300" fill="none" stroke="#1f78e8" stroke-width="2"/></svg>
<div class="t" style="left:1714px;top:118.8px;font-size:12.5px;line-height:18px;color:#ffffff;letter-spacing:-0.60px;">Create and Share</div>
<div class="t" style="left:1729px;top:134.8px;font-size:12.5px;line-height:18px;color:#ffffff;letter-spacing:-0.62px;">Adobe PDF</div>
<div class="t" style="left:1720px;top:159.5px;font-size:12px;line-height:17px;color:#e6e6e6;letter-spacing:-0.18px;">Adobe Acrobat</div>
<i class="a" style="left:1813px;top:84px;width:1px;height:88px;background:#4a4a4a"></i>
<svg class="a" style="left:1892px;top:161px" width="11" height="7" viewBox="0 0 11 7"><path d="M1 1 5.500 5.500 10 1" fill="none" stroke="#e0e0e0" stroke-width="1.400"/></svg>
<div class="a" style="left:8px;top:186px;width:100px;height:24px;border:1px solid #5a5654;border-radius:4px;background:#292929"></div>
<div class="t" style="left:15px;top:190.0px;font-size:13px;line-height:18px;color:#fff;letter-spacing:0.42px;">AM3</div>
<svg class="a" style="left:94px;top:197px" width="8" height="6" viewBox="0 0 8 6"><path d="M1.3 1.2 4 3.900 6.700 1.2" fill="none" stroke="#d8d8d8" stroke-width="1.5"/></svg>
<i class="a" style="left:119px;top:193px;width:2px;height:2px;background:#ddd;box-shadow:0 5px #ddd,0 10px #ddd"></i>
<div class="a" style="left:130px;top:186px;width:72px;height:24px;border:1px solid #5a5654;border-radius:4px;background:#292929"></div>
<svg class="a" style="left:137px;top:194px" width="12" height="12" viewBox="0 0 12 12"><path d="M1 1 11 11M11 1 1 11" stroke="#7b7b7b" stroke-width="1.2"/></svg>
<svg class="a" style="left:158px;top:194px" width="16" height="12" viewBox="0 0 16 12"><path d="M1 6.5 5.5 11 15 1" fill="none" stroke="#7b7b7b" stroke-width="1.2"/></svg>
<div class="t" style="left:184px;top:189px;font:italic 16px/20px 'Liberation Serif',serif;color:#dcdcdc;letter-spacing:-0.5px">fx</div>
<div class="a" style="left:209px;top:186px;width:1701px;height:64px;border:1px solid #5a5654;border-radius:4px;background:#292929"></div>
<div class="t" style="left:220px;top:190.5px;font-size:12.5px;line-height:18px;color:#fff;letter-spacing:0.19px;">=SUBTOTAL(9;AM6:AM221)</div>
<svg class="a" style="left:1897px;top:193px" width="10" height="7" viewBox="0 0 10 7"><path d="M1 5.5 5 1.5 9 5.5" fill="none" stroke="#d0d0d0" stroke-width="1.3"/></svg>
<div id="gridbg"></div>
<div id="grid">
<i class="h" style="top:292px;left:25px;width:1873px"></i>
<i class="h" style="top:309px;left:25px;width:1873px"></i>
<i class="h" style="top:347px;left:25px;width:1873px"></i>
<i class="h" style="top:385px;left:25px;width:1873px"></i>
<i class="h" style="top:449px;left:25px;width:174px"></i>
<i class="h" style="top:470px;left:25px;width:174px"></i>
<i class="h" style="top:491px;left:25px;width:174px"></i>
<i class="h" style="top:508px;left:25px;width:174px"></i>
<i class="h" style="top:525px;left:25px;width:174px"></i>
<i class="h" style="top:546px;left:25px;width:174px"></i>
<i class="h" style="top:563px;left:25px;width:174px"></i>
<i class="h" style="top:584px;left:25px;width:174px"></i>
<i class="h" style="top:601px;left:25px;width:174px"></i>
<i class="h" style="top:618px;left:25px;width:174px"></i>
<i class="h" style="top:639px;left:25px;width:174px"></i>
<i class="h" style="top:656px;left:25px;width:174px"></i>
<i class="h" style="top:673px;left:25px;width:174px"></i>
<i class="h" style="top:694px;left:25px;width:174px"></i>
<i class="h" style="top:715px;left:25px;width:174px"></i>
<i class="h" style="top:732px;left:25px;width:174px"></i>
<i class="h" style="top:753px;left:25px;width:174px"></i>
<i class="h" style="top:770px;left:25px;width:174px"></i>
<i class="h" style="top:787px;left:25px;width:174px"></i>
<i class="h" style="top:808px;left:25px;width:174px"></i>
<i class="h" style="top:825px;left:25px;width:174px"></i>
<i class="h" style="top:846px;left:25px;width:174px"></i>
<i class="h" style="top:863px;left:25px;width:174px"></i>
<i class="h" style="top:884px;left:25px;width:174px"></i>
<i class="h" style="top:901px;left:25px;width:174px"></i>
<i class="h" style="top:922px;left:25px;width:174px"></i>
<i class="h" style="top:943px;left:25px;width:174px"></i>
<i class="h" style="top:960px;left:25px;width:174px"></i>
<i class="h" style="top:977px;left:25px;width:174px"></i>
<i class="v" style="left:134px;top:275px;height:73px"></i>
<i class="v" style="left:198px;top:275px;height:73px"></i>
<i class="v" style="left:418px;top:275px;height:73px"></i>
<i class="v" style="left:482px;top:275px;height:73px"></i>
<i class="v" style="left:546px;top:275px;height:73px"></i>
<i class="v" style="left:610px;top:275px;height:73px"></i>
<i class="v" style="left:741px;top:275px;height:73px"></i>
<i class="v" style="left:805px;top:275px;height:73px"></i>
<i class="v" style="left:869px;top:275px;height:73px"></i>
<i class="v" style="left:990px;top:275px;height:73px"></i>
<i class="v" style="left:1087px;top:275px;height:73px"></i>
<i class="v" style="left:1184px;top:275px;height:73px"></i>
<i class="v" style="left:1281px;top:275px;height:73px"></i>
<i class="v" style="left:1423px;top:275px;height:73px"></i>
<i class="v" style="left:1520px;top:275px;height:73px"></i>
<i class="v" style="left:1617px;top:275px;height:73px"></i>
<i class="v" style="left:1714px;top:275px;height:73px"></i>
<i class="v" style="left:1836px;top:275px;height:73px"></i>
<i class="v" style="left:134px;top:347px;height:38px"></i>
<i class="v" style="left:198px;top:347px;height:38px"></i>
<i class="v" style="left:418px;top:347px;height:38px"></i>
<i class="v" style="left:482px;top:347px;height:38px"></i>
<i class="v" style="left:546px;top:347px;height:38px"></i>
<i class="v" style="left:610px;top:347px;height:38px"></i>
<i class="v" style="left:741px;top:347px;height:38px"></i>
<i class="v" style="left:805px;top:347px;height:38px"></i>
<i class="v" style="left:1714px;top:347px;height:38px"></i>
<i class="v" style="left:134px;top:385px;height:593px"></i>
<i class="v" style="left:198px;top:385px;height:593px"></i>
<i class="f" style="left:418px;top:385px;width:64px;height:64px;background:#da9694"></i>
<i class="f" style="left:482px;top:385px;width:64px;height:64px;background:#da9694"></i>
<i class="f" style="left:546px;top:385px;width:64px;height:64px;background:#da9694"></i>
<i class="f" style="left:610px;top:385px;width:131px;height:64px;background:#da9694"></i>
<i class="f" style="left:741px;top:385px;width:64px;height:64px;background:#da9694"></i>
<i class="f" style="left:805px;top:385px;width:64px;height:64px;background:#da9694"></i>
<i class="f" style="left:869px;top:385px;width:121px;height:64px;background:#d9d9d9"></i>
<i class="f" style="left:990px;top:385px;width:97px;height:64px;background:#d9d9d9"></i>
<i class="f" style="left:1087px;top:385px;width:97px;height:64px;background:#d9d9d9"></i>
<i class="f" style="left:1184px;top:385px;width:97px;height:64px;background:#d9d9d9"></i>
<i class="f" style="left:1281px;top:385px;width:142px;height:64px;background:#d9d9d9"></i>
<i class="f" style="left:1423px;top:385px;width:97px;height:64px;background:#d9d9d9"></i>
<i class="f" style="left:1520px;top:385px;width:97px;height:64px;background:#d9d9d9"></i>
<i class="f" style="left:1617px;top:385px;width:97px;height:64px;background:#d9d9d9"></i>
<i class="f" style="left:1714px;top:385px;width:122px;height:64px;background:#d9d9d9"></i>
<i class="f" style="left:1836px;top:385px;width:97px;height:64px;background:#d9d9d9"></i>
<i class="hb" style="top:385px;left:198px;width:1700px"></i>
<i class="hb" style="top:449px;left:198px;width:1700px"></i>
<i class="hb" style="top:470px;left:198px;width:1700px"></i>
<i class="hb" style="top:491px;left:198px;width:1700px"></i>
<i class="hb" style="top:508px;left:198px;width:1700px"></i>
<i class="hb" style="top:525px;left:198px;width:1700px"></i>
<i class="hb" style="top:546px;left:198px;width:1700px"></i>
<i class="hb" style="top:563px;left:198px;width:1700px"></i>
<i class="hb" style="top:584px;left:198px;width:1700px"></i>
<i class="hb" style="top:601px;left:198px;width:1700px"></i>
<i class="hb" style="top:618px;left:198px;width:1700px"></i>
<i class="hb" style="top:639px;left:198px;width:1700px"></i>
<i class="hb" style="top:656px;left:198px;width:1700px"></i>
<i class="hb" style="top:673px;left:198px;width:1700px"></i>
<i class="hb" style="top:694px;left:198px;width:1700px"></i>
<i class="hb" style="top:715px;left:198px;width:1700px"></i>
<i class="hb" style="top:732px;left:198px;width:1700px"></i>
<i class="hb" style="top:753px;left:198px;width:1700px"></i>
<i class="hb" style="top:770px;left:198px;width:1700px"></i>
<i class="hb" style="top:787px;left:198px;width:1700px"></i>
<i class="hb" style="top:808px;left:198px;width:1700px"></i>
<i class="hb" style="top:825px;left:198px;width:1700px"></i>
<i class="hb" style="top:846px;left:198px;width:1700px"></i>
<i class="hb" style="top:863px;left:198px;width:1700px"></i>
<i class="hb" style="top:884px;left:198px;width:1700px"></i>
<i class="hb" style="top:901px;left:198px;width:1700px"></i>
<i class="hb" style="top:922px;left:198px;width:1700px"></i>
<i class="hb" style="top:943px;left:198px;width:1700px"></i>
<i class="hb" style="top:960px;left:198px;width:1700px"></i>
<i class="hb" style="top:977px;left:198px;width:1700px"></i>
<i class="vb" style="left:198px;top:385px;height:593px"></i>
<i class="vb" style="left:418px;top:385px;height:593px"></i>
<i class="vb" style="left:482px;top:385px;height:593px"></i>
<i class="vb" style="left:546px;top:385px;height:593px"></i>
<i class="vb" style="left:610px;top:385px;height:593px"></i>
<i class="vb" style="left:741px;top:385px;height:593px"></i>
<i class="vb" style="left:805px;top:385px;height:593px"></i>
<i class="vb" style="left:869px;top:385px;height:593px"></i>
<i class="vb" style="left:990px;top:385px;height:593px"></i>
<i class="vb" style="left:1087px;top:385px;height:593px"></i>
<i class="vb" style="left:1184px;top:385px;height:593px"></i>
<i class="vb" style="left:1281px;top:385px;height:593px"></i>
<i class="vb" style="left:1423px;top:385px;height:593px"></i>
<i class="vb" style="left:1520px;top:385px;height:593px"></i>
<i class="vb" style="left:1617px;top:385px;height:593px"></i>
<i class="vb" style="left:1714px;top:385px;height:593px"></i>
<i class="vb" style="left:1836px;top:385px;height:593px"></i>
<i class="fz" style="left:869px;top:275px;height:703px"></i>
<div class="c r" style="left:869px;width:115px;top:331px;height:17px;line-height:17px">146.290.466,67</div>
<div class="c r" style="left:990px;width:91px;top:331px;height:17px;line-height:17px">20.375.687,50</div>
<div class="c r" style="left:1087px;width:91px;top:331px;height:17px;line-height:17px">5.327.862,70</div>
<div class="c r" style="left:1184px;width:77px;top:331px;height:17px;line-height:17px">-</div>
<div class="c r" style="left:1281px;width:136px;top:331px;height:17px;line-height:17px">171.994.016,86</div>
<div class="c r" style="left:1423px;width:91px;top:331px;height:17px;line-height:17px">0,01</div>
<div class="c r" style="left:1520px;width:91px;top:331px;height:17px;line-height:17px">78.080,00</div>
<div class="c r" style="left:1617px;width:91px;top:331px;height:17px;line-height:17px">5.555.143,95</div>
<div class="c r" style="left:1714px;width:116px;top:331px;height:17px;line-height:17px">124.543.000,00</div>
<div class="c r" style="left:1836px;width:91px;top:331px;height:17px;line-height:17px">25.593.250,00</div>
<div class="c ctr" style="left:870px;width:845px;top:348px;height:38px;line-height:38px">APR</div>
<div class="c ctr" style="left:134px;width:64px;top:432px;height:17px;line-height:17px">1</div>
<div class="c" style="left:201px;top:432px;height:17px;line-height:17px">NAMA</div>
<div class="c hp" style="left:419px;width:63px;top:387px;height:62px;line-height:63px;padding-left:8px;letter-spacing:-0.5px;">Awal kerja</div>
<div class="c hp" style="left:483px;width:63px;top:387px;height:62px;line-height:63px;padding-left:8.5px;letter-spacing:-0.5px;">akhi kerja</div>
<div class="c hp" style="left:547px;width:63px;top:387px;height:62px;line-height:63px;padding-left:8px;letter-spacing:-0.5px;">Bulan bekerja</div>
<div class="c hp" style="left:611px;width:130px;top:387px;height:62px;line-height:63px;padding-left:8px;">NIK</div>
<div class="c hp" style="left:742px;width:63px;top:387px;height:62px;line-height:63px;padding-left:8px;">OS</div>
<div class="c hp" style="left:806px;width:63px;top:387px;height:62px;line-height:63px;padding-left:8px;">PTKP</div>
<div class="c hg" style="left:870px;width:120px;top:408.5px;line-height:17px">Gaji Pokok</div>
<div class="c hg" style="left:991px;width:96px;top:401.0px;line-height:17px">Total<br>Tunjangan</div>
<div class="c hg" style="left:1088px;width:96px;top:401.0px;line-height:17px">Premi<br>JKK, JKM, Kes</div>
<div class="c hg" style="left:1185px;width:96px;top:401.0px;line-height:17px">Tunjangan<br>PPh</div>
<div class="c hg" style="left:1282px;width:141px;top:401.0px;line-height:17px">Penghasilan<br>Bruto</div>
<div class="c hg" style="left:1424px;width:96px;top:401.0px;line-height:17px">Tarif<br>TER</div>
<div class="c hg" style="left:1521px;width:96px;top:408.5px;line-height:17px">PPh 21</div>
<div class="c hg" style="left:1618px;width:96px;top:401.0px;line-height:17px">Pengurang<br>JHT/JP</div>
<div class="c hg" style="left:1715px;width:121px;top:408.5px;line-height:17px">Gaji Pokok</div>
<div class="c hg" style="left:1837px;width:96px;top:401.0px;line-height:17px">Total<br>Tunjangan</div>
<span class="fb" style="left:181px;top:432px"><svg width="16" height="16" viewBox="0 0 16 16"><path d="M4.5 6.5h7l-3.5 4z" fill="#505050"/></svg></span>
<span class="fb" style="left:401px;top:432px"><svg width="16" height="16" viewBox="0 0 16 16"><path d="M4.5 6.5h7l-3.5 4z" fill="#505050"/></svg></span>
<span class="fb" style="left:465px;top:432px"><svg width="16" height="16" viewBox="0 0 16 16"><path d="M6 3.500h8.500l-3 3.200v4.800H9v-4.800z" fill="#4a4a4a"/><path d="M2.500 9.500h4.500l-2.250 2.500z" fill="#4a4a4a"/></svg></span>
<span class="fb" style="left:529px;top:432px"><svg width="16" height="16" viewBox="0 0 16 16"><path d="M6 3.500h8.500l-3 3.200v4.800H9v-4.800z" fill="#4a4a4a"/><path d="M2.500 9.500h4.500l-2.250 2.500z" fill="#4a4a4a"/></svg></span>
<span class="fb" style="left:593px;top:432px"><svg width="16" height="16" viewBox="0 0 16 16"><path d="M4.5 6.5h7l-3.5 4z" fill="#505050"/></svg></span>
<span class="fb" style="left:724px;top:432px"><svg width="16" height="16" viewBox="0 0 16 16"><path d="M4.5 6.5h7l-3.5 4z" fill="#505050"/></svg></span>
<span class="fb" style="left:788px;top:432px"><svg width="16" height="16" viewBox="0 0 16 16"><path d="M4.5 6.5h7l-3.5 4z" fill="#505050"/></svg></span>
<span class="fb" style="left:852px;top:432px"><svg width="16" height="16" viewBox="0 0 16 16"><path d="M4.5 6.5h7l-3.5 4z" fill="#505050"/></svg></span>
<span class="fb" style="left:973px;top:432px"><svg width="16" height="16" viewBox="0 0 16 16"><path d="M4.5 6.5h7l-3.5 4z" fill="#505050"/></svg></span>
<span class="fb" style="left:1070px;top:432px"><svg width="16" height="16" viewBox="0 0 16 16"><path d="M4.5 6.5h7l-3.5 4z" fill="#505050"/></svg></span>
<span class="fb" style="left:1167px;top:432px"><svg width="16" height="16" viewBox="0 0 16 16"><path d="M4.5 6.5h7l-3.5 4z" fill="#505050"/></svg></span>
<span class="fb" style="left:1264px;top:432px"><svg width="16" height="16" viewBox="0 0 16 16"><path d="M4.5 6.5h7l-3.5 4z" fill="#505050"/></svg></span>
<span class="fb" style="left:1406px;top:432px"><svg width="16" height="16" viewBox="0 0 16 16"><path d="M4.5 6.5h7l-3.5 4z" fill="#505050"/></svg></span>
<span class="fb" style="left:1503px;top:432px"><svg width="16" height="16" viewBox="0 0 16 16"><path d="M4.5 6.5h7l-3.5 4z" fill="#505050"/></svg></span>
<span class="fb" style="left:1600px;top:432px"><svg width="16" height="16" viewBox="0 0 16 16"><path d="M4.5 6.5h7l-3.5 4z" fill="#505050"/></svg></span>
<span class="fb" style="left:1697px;top:432px"><svg width="16" height="16" viewBox="0 0 16 16"><path d="M4.5 6.5h7l-3.5 4z" fill="#505050"/></svg></span>
<span class="fb" style="left:1819px;top:432px"><svg width="16" height="16" viewBox="0 0 16 16"><path d="M4.5 6.5h7l-3.5 4z" fill="#505050"/></svg></span>
<span class="fb" style="left:1916px;top:432px"><svg width="16" height="16" viewBox="0 0 16 16"><path d="M4.5 6.5h7l-3.5 4z" fill="#505050"/></svg></span>
<div class="c ctr" style="left:135px;width:64px;top:451px;height:21px;line-height:22px;">2</div>
<div class="c" style="left:200.5px;top:451px;height:21px;line-height:22px;">Sahlan Mubarok</div>
<div class="c r" style="left:418px;width:62px;top:451px;height:21px;line-height:22px;">1</div>
<div class="c r" style="left:482px;width:62px;top:451px;height:21px;line-height:22px;">12</div>
<div class="c r" style="left:546px;width:62px;top:451px;height:21px;line-height:22px;">12</div>
<div class="c nik" style="left:614px;top:451px;height:21px;line-height:22px;">3205052207000001</div>
<i class="tri" style="left:611px;top:450px"></i>
<div class="c" style="left:744px;top:451px;height:21px;line-height:22px;">TMI</div>
<div class="c" style="left:808px;top:451px;height:21px;line-height:22px;">TK/0</div>
<div class="c r" style="left:869px;width:115px;top:451px;height:21px;line-height:22px">2.329.000,00</div>
<div class="c r" style="left:990px;width:91px;top:451px;height:21px;line-height:22px">300.000,00</div>
<div class="c r" style="left:1087px;width:91px;top:451px;height:21px;line-height:22px">105.716,40</div>
<div class="c r" style="left:1184px;width:77px;top:451px;height:21px;line-height:22px">-</div>
<div class="c r" style="left:1281px;width:136px;top:451px;height:21px;line-height:22px">2.734.716,40</div>
<div class="c r" style="left:1423px;width:77px;top:451px;height:21px;line-height:22px">-</div>
<div class="c r" style="left:1520px;width:77px;top:451px;height:21px;line-height:22px">-</div>
<div class="c r" style="left:1617px;width:91px;top:451px;height:21px;line-height:22px">69.856,65</div>
<div class="c r" style="left:1714px;width:116px;top:451px;height:21px;line-height:22px">2.329.000,00</div>
<div class="c r" style="left:1836px;width:91px;top:451px;height:21px;line-height:22px">300.000,00</div>
<div class="c ctr" style="left:135px;width:64px;top:472px;height:21px;line-height:22px;">12</div>
<div class="c" style="left:200.5px;top:472px;height:21px;line-height:22px;">Muh Sofian Mawardi</div>
<div class="c r" style="left:418px;width:62px;top:472px;height:21px;line-height:22px;">3</div>
<div class="c r" style="left:482px;width:62px;top:472px;height:21px;line-height:22px;">12</div>
<div class="c r" style="left:546px;width:62px;top:472px;height:21px;line-height:22px;">10</div>
<div class="c nik" style="left:614px;top:472px;height:21px;line-height:22px;">5108051004930002</div>
<i class="tri" style="left:611px;top:471px"></i>
<div class="c" style="left:744px;top:472px;height:21px;line-height:22px;">TMI</div>
<div class="c" style="left:808px;top:472px;height:21px;line-height:22px;">TK/0</div>
<i class="tri" style="left:806px;top:471px"></i>
<div class="c r" style="left:869px;width:115px;top:472px;height:21px;line-height:22px">3.535.000,00</div>
<div class="c r" style="left:990px;width:91px;top:472px;height:21px;line-height:22px">575.000,00</div>
<div class="c r" style="left:1087px;width:91px;top:472px;height:21px;line-height:22px">19.089,00</div>
<div class="c r" style="left:1184px;width:77px;top:472px;height:21px;line-height:22px">-</div>
<div class="c r" style="left:1281px;width:136px;top:472px;height:21px;line-height:22px">4.129.089,00</div>
<div class="c r" style="left:1423px;width:77px;top:472px;height:21px;line-height:22px">-</div>
<div class="c r" style="left:1520px;width:77px;top:472px;height:21px;line-height:22px">-</div>
<div class="c r" style="left:1617px;width:91px;top:472px;height:21px;line-height:22px">106.050,00</div>
<div class="c r" style="left:1714px;width:116px;top:472px;height:21px;line-height:22px">3.535.000,00</div>
<div class="c r" style="left:1836px;width:91px;top:472px;height:21px;line-height:22px">500.000,00</div>
<div class="c ctr" style="left:135px;width:64px;top:492px;height:17px;line-height:18px;">29</div>
<div class="c" style="left:200.5px;top:492px;height:17px;line-height:18px;">Bagas Anggara Saputra</div>
<div class="c r" style="left:418px;width:62px;top:492px;height:17px;line-height:18px;">1</div>
<div class="c r" style="left:482px;width:62px;top:492px;height:17px;line-height:18px;">12</div>
<div class="c r" style="left:546px;width:62px;top:492px;height:17px;line-height:18px;">12</div>
<div class="c nik" style="left:614px;top:492px;height:17px;line-height:18px;">1671033005010006</div>
<i class="tri" style="left:611px;top:492px"></i>
<div class="c" style="left:744px;top:492px;height:17px;line-height:18px;">TMI</div>
<div class="c" style="left:808px;top:492px;height:17px;line-height:18px;">TK/0</div>
<div class="c r" style="left:869px;width:115px;top:492px;height:17px;line-height:18px">3.917.000,00</div>
<div class="c r" style="left:990px;width:91px;top:492px;height:17px;line-height:18px">300.000,00</div>
<div class="c r" style="left:1087px;width:91px;top:492px;height:17px;line-height:18px">21.149,83</div>
<div class="c r" style="left:1184px;width:77px;top:492px;height:17px;line-height:18px">-</div>
<div class="c r" style="left:1281px;width:136px;top:492px;height:17px;line-height:18px">4.238.149,83</div>
<div class="c r" style="left:1423px;width:77px;top:492px;height:17px;line-height:18px">-</div>
<div class="c r" style="left:1520px;width:77px;top:492px;height:17px;line-height:18px">-</div>
<div class="c r" style="left:1617px;width:91px;top:492px;height:17px;line-height:18px">117.499,05</div>
<div class="c r" style="left:1714px;width:116px;top:492px;height:17px;line-height:18px">3.917.000,00</div>
<div class="c r" style="left:1836px;width:91px;top:492px;height:17px;line-height:18px">300.000,00</div>
<div class="c ctr" style="left:135px;width:64px;top:509px;height:17px;line-height:18px;">31</div>
<div class="c" style="left:200.5px;top:509px;height:17px;line-height:18px;">Raden Harry</div>
<div class="c r" style="left:418px;width:62px;top:509px;height:17px;line-height:18px;">1</div>
<div class="c r" style="left:482px;width:62px;top:509px;height:17px;line-height:18px;">12</div>
<div class="c r" style="left:546px;width:62px;top:509px;height:17px;line-height:18px;">12</div>
<div class="c nik" style="left:614px;top:509px;height:17px;line-height:18px;">1671062504830013</div>
<i class="tri" style="left:611px;top:509px"></i>
<div class="c" style="left:744px;top:509px;height:17px;line-height:18px;">TMI</div>
<div class="c" style="left:808px;top:509px;height:17px;line-height:18px;">K/3</div>
<div class="c r" style="left:869px;width:115px;top:509px;height:17px;line-height:18px">3.917.000,00</div>
<div class="c r" style="left:990px;width:91px;top:509px;height:17px;line-height:18px">2.801.250,00</div>
<div class="c r" style="left:1087px;width:91px;top:509px;height:17px;line-height:18px">21.149,83</div>
<div class="c r" style="left:1184px;width:77px;top:509px;height:17px;line-height:18px">-</div>
<div class="c r" style="left:1281px;width:136px;top:509px;height:17px;line-height:18px">6.739.399,83</div>
<div class="c r" style="left:1423px;width:91px;top:509px;height:17px;line-height:18px">0,00</div>
<div class="c r" style="left:1520px;width:91px;top:509px;height:17px;line-height:18px">16.848,00</div>
<div class="c r" style="left:1617px;width:91px;top:509px;height:17px;line-height:18px">117.499,05</div>
<div class="c r" style="left:1714px;width:116px;top:509px;height:17px;line-height:18px">3.917.000,00</div>
<div class="c r" style="left:1836px;width:91px;top:509px;height:17px;line-height:18px">1.781.500,00</div>
<div class="c ctr" style="left:135px;width:64px;top:527px;height:21px;line-height:22px;">32</div>
<div class="c" style="left:200.5px;top:527px;height:21px;line-height:22px;">R.M. Rocky Ariansyah</div>
<div class="c r" style="left:418px;width:62px;top:527px;height:21px;line-height:22px;">1</div>
<div class="c r" style="left:482px;width:62px;top:527px;height:21px;line-height:22px;">12</div>
<div class="c r" style="left:546px;width:62px;top:527px;height:21px;line-height:22px;">12</div>
<div class="c nik" style="left:614px;top:527px;height:21px;line-height:22px;">1671112310800002</div>
<i class="tri" style="left:611px;top:526px"></i>
<div class="c" style="left:744px;top:527px;height:21px;line-height:22px;">TMI</div>
<div class="c" style="left:808px;top:527px;height:21px;line-height:22px;">K/3</div>
<div class="c r" style="left:869px;width:115px;top:527px;height:21px;line-height:22px">3.917.000,00</div>
<div class="c r" style="left:990px;width:91px;top:527px;height:21px;line-height:22px">2.681.250,00</div>
<div class="c r" style="left:1087px;width:91px;top:527px;height:21px;line-height:22px">21.149,83</div>
<div class="c r" style="left:1184px;width:77px;top:527px;height:21px;line-height:22px">-</div>
<div class="c r" style="left:1281px;width:136px;top:527px;height:21px;line-height:22px">6.619.399,83</div>
<div class="c r" style="left:1423px;width:91px;top:527px;height:21px;line-height:22px">0,00</div>
<div class="c r" style="left:1520px;width:91px;top:527px;height:21px;line-height:22px">16.548,00</div>
<div class="c r" style="left:1617px;width:91px;top:527px;height:21px;line-height:22px">117.499,05</div>
<div class="c r" style="left:1714px;width:116px;top:527px;height:21px;line-height:22px">3.917.000,00</div>
<div class="c r" style="left:1836px;width:91px;top:527px;height:21px;line-height:22px">1.877.250,00</div>
<div class="c ctr" style="left:135px;width:64px;top:547px;height:17px;line-height:18px;">33</div>
<div class="c" style="left:200.5px;top:547px;height:17px;line-height:18px;">Rezky Alfindo</div>
<div class="c r" style="left:418px;width:62px;top:547px;height:17px;line-height:18px;">1</div>
<div class="c r" style="left:482px;width:62px;top:547px;height:17px;line-height:18px;">12</div>
<div class="c r" style="left:546px;width:62px;top:547px;height:17px;line-height:18px;">12</div>
<div class="c nik" style="left:614px;top:547px;height:17px;line-height:18px;">1671041505990007</div>
<i class="tri" style="left:611px;top:547px"></i>
<div class="c" style="left:744px;top:547px;height:17px;line-height:18px;">TMI</div>
<div class="c" style="left:808px;top:547px;height:17px;line-height:18px;">TK/0</div>
<div class="c r" style="left:869px;width:115px;top:547px;height:17px;line-height:18px">3.917.000,00</div>
<div class="c r" style="left:990px;width:91px;top:547px;height:17px;line-height:18px">1.000.000,00</div>
<div class="c r" style="left:1087px;width:91px;top:547px;height:17px;line-height:18px">21.149,83</div>
<div class="c r" style="left:1184px;width:77px;top:547px;height:17px;line-height:18px">-</div>
<div class="c r" style="left:1281px;width:136px;top:547px;height:17px;line-height:18px">4.938.149,83</div>
<div class="c r" style="left:1423px;width:77px;top:547px;height:17px;line-height:18px">-</div>
<div class="c r" style="left:1520px;width:77px;top:547px;height:17px;line-height:18px">-</div>
<div class="c r" style="left:1617px;width:91px;top:547px;height:17px;line-height:18px">117.499,05</div>
<div class="c r" style="left:1714px;width:116px;top:547px;height:17px;line-height:18px">3.917.000,00</div>
<div class="c r" style="left:1836px;width:91px;top:547px;height:17px;line-height:18px">1.100.500,00</div>
<div class="c ctr" style="left:135px;width:64px;top:565px;height:21px;line-height:22px;">34</div>
<div class="c" style="left:200.5px;top:565px;height:21px;line-height:22px;">Chaeril Saputra</div>
<div class="c r" style="left:418px;width:62px;top:565px;height:21px;line-height:22px;">4</div>
<div class="c r" style="left:482px;width:62px;top:565px;height:21px;line-height:22px;">12</div>
<div class="c r" style="left:546px;width:62px;top:565px;height:21px;line-height:22px;">9</div>
<div class="c nik" style="left:614px;top:565px;height:21px;line-height:22px;">1607100603000006</div>
<i class="tri" style="left:611px;top:564px"></i>
<div class="c" style="left:744px;top:565px;height:21px;line-height:22px;">TMI</div>
<div class="c" style="left:808px;top:565px;height:21px;line-height:22px;">TK/0</div>
<div class="c r" style="left:869px;width:115px;top:565px;height:21px;line-height:22px">2.010.800,00</div>
<div class="c r" style="left:990px;width:77px;top:565px;height:21px;line-height:22px">-</div>
<div class="c r" style="left:1087px;width:91px;top:565px;height:21px;line-height:22px">177.815,23</div>
<div class="c r" style="left:1184px;width:77px;top:565px;height:21px;line-height:22px">-</div>
<div class="c r" style="left:1281px;width:136px;top:565px;height:21px;line-height:22px">2.188.615,23</div>
<div class="c r" style="left:1423px;width:77px;top:565px;height:21px;line-height:22px">-</div>
<div class="c r" style="left:1520px;width:77px;top:565px;height:21px;line-height:22px">-</div>
<div class="c r" style="left:1617px;width:91px;top:565px;height:21px;line-height:22px">117.499,05</div>
<div class="c r" style="left:1714px;width:116px;top:565px;height:21px;line-height:22px">2.742.000,00</div>
<div class="c r" style="left:1836px;width:91px;top:565px;height:21px;line-height:22px">2.025.000,00</div>
<div class="c ctr" style="left:135px;width:64px;top:585px;height:17px;line-height:18px;">39</div>
<div class="c" style="left:200.5px;top:585px;height:17px;line-height:18px;">Sarip Hidayat</div>
<div class="c r" style="left:418px;width:62px;top:585px;height:17px;line-height:18px;">3</div>
<div class="c r" style="left:482px;width:62px;top:585px;height:17px;line-height:18px;">12</div>
<div class="c r" style="left:546px;width:62px;top:585px;height:17px;line-height:18px;">10</div>
<div class="c nik" style="left:614px;top:585px;height:17px;line-height:18px;">3603010507810004</div>
<i class="tri" style="left:611px;top:585px"></i>
<div class="c" style="left:744px;top:585px;height:17px;line-height:18px;">TMI</div>
<div class="c" style="left:808px;top:585px;height:17px;line-height:18px;">K/2</div>
<div class="c r" style="left:869px;width:115px;top:585px;height:17px;line-height:18px">3.432.000,00</div>
<div class="c r" style="left:990px;width:77px;top:585px;height:17px;line-height:18px">-</div>
<div class="c r" style="left:1087px;width:91px;top:585px;height:17px;line-height:18px">27.376,42</div>
<div class="c r" style="left:1184px;width:77px;top:585px;height:17px;line-height:18px">-</div>
<div class="c r" style="left:1281px;width:136px;top:585px;height:17px;line-height:18px">3.459.376,42</div>
<div class="c r" style="left:1423px;width:77px;top:585px;height:17px;line-height:18px">-</div>
<div class="c r" style="left:1520px;width:77px;top:585px;height:17px;line-height:18px">-</div>
<div class="c r" style="left:1617px;width:91px;top:585px;height:17px;line-height:18px">152.091,21</div>
<div class="c r" style="left:1714px;width:116px;top:585px;height:17px;line-height:18px">3.432.000,00</div>
<div class="c r" style="left:1836px;width:91px;top:585px;height:17px;line-height:18px">2.265.000,00</div>
<div class="c ctr" style="left:135px;width:64px;top:602px;height:17px;line-height:18px;">43</div>
<div class="c" style="left:200.5px;top:602px;height:17px;line-height:18px;">Dian Candra</div>
<div class="c r" style="left:418px;width:62px;top:602px;height:17px;line-height:18px;">1</div>
<div class="c r" style="left:482px;width:62px;top:602px;height:17px;line-height:18px;">12</div>
<div class="c r" style="left:546px;width:62px;top:602px;height:17px;line-height:18px;">12</div>
<div class="c nik" style="left:614px;top:602px;height:17px;line-height:18px;">3201102805850006</div>
<i class="tri" style="left:611px;top:602px"></i>
<div class="c" style="left:744px;top:602px;height:17px;line-height:18px;">TMI</div>
<div class="c" style="left:808px;top:602px;height:17px;line-height:18px;">K/1</div>
<div class="c r" style="left:869px;width:115px;top:602px;height:17px;line-height:18px">5.127.000,00</div>
<div class="c r" style="left:990px;width:91px;top:602px;height:17px;line-height:18px">1.075.000,00</div>
<div class="c r" style="left:1087px;width:91px;top:602px;height:17px;line-height:18px">27.685,24</div>
<div class="c r" style="left:1184px;width:77px;top:602px;height:17px;line-height:18px">-</div>
<div class="c r" style="left:1281px;width:136px;top:602px;height:17px;line-height:18px">6.229.685,24</div>
<div class="c r" style="left:1423px;width:91px;top:602px;height:17px;line-height:18px">0,00</div>
<div class="c r" style="left:1520px;width:91px;top:602px;height:17px;line-height:18px">15.574,00</div>
<div class="c r" style="left:1617px;width:91px;top:602px;height:17px;line-height:18px">153.806,91</div>
<div class="c r" style="left:1714px;width:116px;top:602px;height:17px;line-height:18px">5.127.000,00</div>
<div class="c r" style="left:1836px;width:91px;top:602px;height:17px;line-height:18px">300.000,00</div>
<div class="c ctr" style="left:135px;width:64px;top:620px;height:21px;line-height:22px;">50</div>
<div class="c" style="left:200.5px;top:620px;height:21px;line-height:22px;">Songko Budi Prasetyo</div>
<div class="c r" style="left:418px;width:62px;top:620px;height:21px;line-height:22px;">1</div>
<div class="c r" style="left:482px;width:62px;top:620px;height:21px;line-height:22px;">12</div>
<div class="c r" style="left:546px;width:62px;top:620px;height:21px;line-height:22px;">12</div>
<div class="c nik" style="left:614px;top:620px;height:21px;line-height:22px;">3174022805830002</div>
<i class="tri" style="left:611px;top:619px"></i>
<div class="c" style="left:744px;top:620px;height:21px;line-height:22px;">TMI</div>
<div class="c" style="left:808px;top:620px;height:21px;line-height:22px;">K/2</div>
<div class="c r" style="left:869px;width:115px;top:620px;height:21px;line-height:22px">5.397.000,00</div>
<div class="c r" style="left:990px;width:91px;top:620px;height:21px;line-height:22px">300.000,00</div>
<div class="c r" style="left:1087px;width:91px;top:620px;height:21px;line-height:22px">29.142,51</div>
<div class="c r" style="left:1184px;width:77px;top:620px;height:21px;line-height:22px">-</div>
<div class="c r" style="left:1281px;width:136px;top:620px;height:21px;line-height:22px">5.726.142,51</div>
<div class="c r" style="left:1423px;width:77px;top:620px;height:21px;line-height:22px">-</div>
<div class="c r" style="left:1520px;width:77px;top:620px;height:21px;line-height:22px">-</div>
<div class="c r" style="left:1617px;width:91px;top:620px;height:21px;line-height:22px">161.902,83</div>
<div class="c r" style="left:1714px;width:116px;top:620px;height:21px;line-height:22px">5.397.000,00</div>
<div class="c r" style="left:1836px;width:91px;top:620px;height:21px;line-height:22px">300.000,00</div>
<div class="c ctr" style="left:135px;width:64px;top:640px;height:17px;line-height:18px;">57</div>
<div class="c" style="left:200.5px;top:640px;height:17px;line-height:18px;">Heru Rubianto</div>
<div class="c r" style="left:418px;width:62px;top:640px;height:17px;line-height:18px;">4</div>
<div class="c r" style="left:482px;width:62px;top:640px;height:17px;line-height:18px;">7</div>
<div class="c r" style="left:546px;width:62px;top:640px;height:17px;line-height:18px;">4</div>
<div class="c nik" style="left:614px;top:640px;height:17px;line-height:18px;">3204271702930002</div>
<i class="tri" style="left:611px;top:640px"></i>
<div class="c" style="left:744px;top:640px;height:17px;line-height:18px;">TMI</div>
<div class="c" style="left:808px;top:640px;height:17px;line-height:18px;">K/1</div>
<i class="tri" style="left:806px;top:640px"></i>
<div class="c r" style="left:869px;width:115px;top:640px;height:17px;line-height:18px">3.758.000,00</div>
<div class="c r" style="left:990px;width:77px;top:640px;height:17px;line-height:18px">-</div>
<div class="c r" style="left:1087px;width:91px;top:640px;height:17px;line-height:18px">170.580,74</div>
<div class="c r" style="left:1184px;width:77px;top:640px;height:17px;line-height:18px">-</div>
<div class="c r" style="left:1281px;width:136px;top:640px;height:17px;line-height:18px">3.928.580,74</div>
<div class="c r" style="left:1423px;width:77px;top:640px;height:17px;line-height:18px">-</div>
<div class="c r" style="left:1520px;width:77px;top:640px;height:17px;line-height:18px">-</div>
<div class="c r" style="left:1617px;width:91px;top:640px;height:17px;line-height:18px">112.718,55</div>
<div class="c r" style="left:1714px;width:116px;top:640px;height:17px;line-height:18px">3.758.000,00</div>
<div class="c r" style="left:1836px;width:91px;top:640px;height:17px;line-height:18px">1.000.000,00</div>
<div class="c ctr" style="left:135px;width:64px;top:657px;height:17px;line-height:18px;">65</div>
<div class="c" style="left:200.5px;top:657px;height:17px;line-height:18px;">Ezufatrin</div>
<div class="c r" style="left:418px;width:62px;top:657px;height:17px;line-height:18px;">1</div>
<div class="c r" style="left:482px;width:62px;top:657px;height:17px;line-height:18px;">7</div>
<div class="c r" style="left:546px;width:62px;top:657px;height:17px;line-height:18px;">7</div>
<div class="c nik" style="left:614px;top:657px;height:17px;line-height:18px;">1606021703900001</div>
<i class="tri" style="left:611px;top:657px"></i>
<div class="c" style="left:744px;top:657px;height:17px;line-height:18px;">TMI</div>
<div class="c" style="left:808px;top:657px;height:17px;line-height:18px;">K/2</div>
<i class="tri" style="left:806px;top:657px"></i>
<div class="c r" style="left:869px;width:115px;top:657px;height:17px;line-height:18px">3.917.000,00</div>
<div class="c r" style="left:990px;width:91px;top:657px;height:17px;line-height:18px">1.656.250,00</div>
<div class="c r" style="left:1087px;width:91px;top:657px;height:17px;line-height:18px">21.149,83</div>
<div class="c r" style="left:1184px;width:77px;top:657px;height:17px;line-height:18px">-</div>
<div class="c r" style="left:1281px;width:136px;top:657px;height:17px;line-height:18px">5.594.399,83</div>
<div class="c r" style="left:1423px;width:77px;top:657px;height:17px;line-height:18px">-</div>
<div class="c r" style="left:1520px;width:77px;top:657px;height:17px;line-height:18px">-</div>
<div class="c r" style="left:1617px;width:91px;top:657px;height:17px;line-height:18px">117.499,05</div>
<div class="c r" style="left:1714px;width:116px;top:657px;height:17px;line-height:18px">3.917.000,00</div>
<div class="c r" style="left:1836px;width:91px;top:657px;height:17px;line-height:18px">1.095.000,00</div>
<div class="c ctr" style="left:135px;width:64px;top:675px;height:21px;line-height:22px;">68</div>
<div class="c" style="left:200.5px;top:675px;height:21px;line-height:22px;">Derry Wijaya</div>
<div class="c r" style="left:418px;width:62px;top:675px;height:21px;line-height:22px;">4</div>
<div class="c r" style="left:482px;width:62px;top:675px;height:21px;line-height:22px;">7</div>
<div class="c r" style="left:546px;width:62px;top:675px;height:21px;line-height:22px;">4</div>
<div class="c nik" style="left:614px;top:675px;height:21px;line-height:22px;">3201060310990001</div>
<i class="tri" style="left:611px;top:674px"></i>
<div class="c" style="left:744px;top:675px;height:21px;line-height:22px;">TMI</div>
<div class="c" style="left:808px;top:675px;height:21px;line-height:22px;">K/2</div>
<div class="c r" style="left:869px;width:115px;top:675px;height:21px;line-height:22px">2.631.933,33</div>
<div class="c r" style="left:990px;width:77px;top:675px;height:21px;line-height:22px">-</div>
<div class="c r" style="left:1087px;width:91px;top:675px;height:21px;line-height:22px">232.761,12</div>
<div class="c r" style="left:1184px;width:77px;top:675px;height:21px;line-height:22px">-</div>
<div class="c r" style="left:1281px;width:136px;top:675px;height:21px;line-height:22px">2.864.694,46</div>
<div class="c r" style="left:1423px;width:77px;top:675px;height:21px;line-height:22px">-</div>
<div class="c r" style="left:1520px;width:77px;top:675px;height:21px;line-height:22px">-</div>
<div class="c r" style="left:1617px;width:91px;top:675px;height:21px;line-height:22px">153.806,91</div>
<div class="c r" style="left:1714px;width:116px;top:675px;height:21px;line-height:22px">3.589.000,00</div>
<div class="c r" style="left:1836px;width:91px;top:675px;height:21px;line-height:22px">200.000,00</div>
<div class="c ctr" style="left:135px;width:64px;top:696px;height:21px;line-height:22px;">70</div>
<div class="c" style="left:200.5px;top:696px;height:21px;line-height:22px;">Febri Eka Saputra</div>
<div class="c r" style="left:418px;width:62px;top:696px;height:21px;line-height:22px;">4</div>
<div class="c r" style="left:482px;width:62px;top:696px;height:21px;line-height:22px;">7</div>
<div class="c r" style="left:546px;width:62px;top:696px;height:21px;line-height:22px;">4</div>
<div class="c nik" style="left:614px;top:696px;height:21px;line-height:22px;">1306092202010001</div>
<i class="tri" style="left:611px;top:695px"></i>
<div class="c" style="left:744px;top:696px;height:21px;line-height:22px;">TMI</div>
<div class="c" style="left:808px;top:696px;height:21px;line-height:22px;">TK/0</div>
<div class="c r" style="left:869px;width:115px;top:696px;height:21px;line-height:22px">2.896.466,67</div>
<div class="c r" style="left:990px;width:77px;top:696px;height:21px;line-height:22px">-</div>
<div class="c r" style="left:1087px;width:91px;top:696px;height:21px;line-height:22px">258.360,14</div>
<div class="c r" style="left:1184px;width:77px;top:696px;height:21px;line-height:22px">-</div>
<div class="c r" style="left:1281px;width:136px;top:696px;height:21px;line-height:22px">3.154.826,81</div>
<div class="c r" style="left:1423px;width:77px;top:696px;height:21px;line-height:22px">-</div>
<div class="c r" style="left:1520px;width:77px;top:696px;height:21px;line-height:22px">-</div>
<div class="c r" style="left:1617px;width:91px;top:696px;height:21px;line-height:22px">170.722,56</div>
<div class="c r" style="left:1714px;width:116px;top:696px;height:21px;line-height:22px">3.778.000,00</div>
<div class="c r" style="left:1836px;width:77px;top:696px;height:21px;line-height:22px">-</div>
<div class="c ctr" style="left:135px;width:64px;top:716px;height:17px;line-height:18px;">81</div>
<div class="c" style="left:200.5px;top:716px;height:17px;line-height:18px;">Dandung Dimyati</div>
<div class="c r" style="left:418px;width:62px;top:716px;height:17px;line-height:18px;">4</div>
<div class="c r" style="left:482px;width:62px;top:716px;height:17px;line-height:18px;">7</div>
<div class="c r" style="left:546px;width:62px;top:716px;height:17px;line-height:18px;">4</div>
<div class="c nik" style="left:614px;top:716px;height:17px;line-height:18px;">3211150402940011</div>
<i class="tri" style="left:611px;top:716px"></i>
<div class="c" style="left:744px;top:716px;height:17px;line-height:18px;">TMI</div>
<div class="c" style="left:808px;top:716px;height:17px;line-height:18px;">K/1</div>
<div class="c r" style="left:869px;width:115px;top:716px;height:17px;line-height:18px">4.483.000,00</div>
<div class="c r" style="left:990px;width:77px;top:716px;height:17px;line-height:18px">-</div>
<div class="c r" style="left:1087px;width:91px;top:716px;height:17px;line-height:18px">203.524,30</div>
<div class="c r" style="left:1184px;width:77px;top:716px;height:17px;line-height:18px">-</div>
<div class="c r" style="left:1281px;width:136px;top:716px;height:17px;line-height:18px">4.686.524,30</div>
<div class="c r" style="left:1423px;width:77px;top:716px;height:17px;line-height:18px">-</div>
<div class="c r" style="left:1520px;width:77px;top:716px;height:17px;line-height:18px">-</div>
<div class="c r" style="left:1617px;width:91px;top:716px;height:17px;line-height:18px">134.487,42</div>
<div class="c r" style="left:1714px;width:116px;top:716px;height:17px;line-height:18px">4.483.000,00</div>
<div class="c r" style="left:1836px;width:91px;top:716px;height:17px;line-height:18px">300.000,00</div>
<div class="c ctr" style="left:135px;width:64px;top:734px;height:21px;line-height:22px;">82</div>
<div class="c" style="left:200.5px;top:734px;height:21px;line-height:22px;">Bela Amelia</div>
<div class="c r" style="left:418px;width:62px;top:734px;height:21px;line-height:22px;">4</div>
<div class="c r" style="left:482px;width:62px;top:734px;height:21px;line-height:22px;">7</div>
<div class="c r" style="left:546px;width:62px;top:734px;height:21px;line-height:22px;">4</div>
<div class="c nik" style="left:614px;top:734px;height:21px;line-height:22px;">3212266008000002</div>
<i class="tri" style="left:611px;top:733px"></i>
<div class="c" style="left:744px;top:734px;height:21px;line-height:22px;">TMI</div>
<div class="c" style="left:808px;top:734px;height:21px;line-height:22px;">TK/0</div>
<div class="c r" style="left:869px;width:115px;top:734px;height:21px;line-height:22px">2.140.866,67</div>
<div class="c r" style="left:990px;width:77px;top:734px;height:21px;line-height:22px">-</div>
<div class="c r" style="left:1087px;width:91px;top:734px;height:21px;line-height:22px">258.360,14</div>
<div class="c r" style="left:1184px;width:77px;top:734px;height:21px;line-height:22px">-</div>
<div class="c r" style="left:1281px;width:136px;top:734px;height:21px;line-height:22px">2.399.226,81</div>
<div class="c r" style="left:1423px;width:77px;top:734px;height:21px;line-height:22px">-</div>
<div class="c r" style="left:1520px;width:77px;top:734px;height:21px;line-height:22px">-</div>
<div class="c r" style="left:1617px;width:91px;top:734px;height:21px;line-height:22px">170.722,56</div>
<div class="c r" style="left:1714px;width:116px;top:734px;height:21px;line-height:22px">3.778.000,00</div>
<div class="c r" style="left:1836px;width:77px;top:734px;height:21px;line-height:22px">-</div>
<div class="c ctr" style="left:135px;width:64px;top:754px;height:17px;line-height:18px;">83</div>
<div class="c" style="left:200.5px;top:754px;height:17px;line-height:18px;">Muhammad Reza Saputra</div>
<div class="c r" style="left:418px;width:62px;top:754px;height:17px;line-height:18px;">1</div>
<div class="c r" style="left:482px;width:62px;top:754px;height:17px;line-height:18px;">11</div>
<div class="c r" style="left:546px;width:62px;top:754px;height:17px;line-height:18px;">11</div>
<div class="c nik" style="left:614px;top:754px;height:17px;line-height:18px;">1671072605030004</div>
<i class="tri" style="left:611px;top:754px"></i>
<div class="c" style="left:744px;top:754px;height:17px;line-height:18px;">TMI</div>
<div class="c" style="left:808px;top:754px;height:17px;line-height:18px;">TK/0</div>
<div class="c r" style="left:869px;width:115px;top:754px;height:17px;line-height:18px">3.917.000,00</div>
<div class="c r" style="left:990px;width:91px;top:754px;height:17px;line-height:18px">1.135.000,00</div>
<div class="c r" style="left:1087px;width:91px;top:754px;height:17px;line-height:18px">21.149,83</div>
<div class="c r" style="left:1184px;width:77px;top:754px;height:17px;line-height:18px">-</div>
<div class="c r" style="left:1281px;width:136px;top:754px;height:17px;line-height:18px">5.073.149,83</div>
<div class="c r" style="left:1423px;width:77px;top:754px;height:17px;line-height:18px">-</div>
<div class="c r" style="left:1520px;width:77px;top:754px;height:17px;line-height:18px">-</div>
<div class="c r" style="left:1617px;width:91px;top:754px;height:17px;line-height:18px">117.499,05</div>
<div class="c r" style="left:1714px;width:116px;top:754px;height:17px;line-height:18px">3.917.000,00</div>
<div class="c r" style="left:1836px;width:91px;top:754px;height:17px;line-height:18px">1.000.000,00</div>
<div class="c ctr" style="left:135px;width:64px;top:771px;height:17px;line-height:18px;">85</div>
<div class="c" style="left:200.5px;top:771px;height:17px;line-height:18px;">Kurniawan</div>
<div class="c r" style="left:418px;width:62px;top:771px;height:17px;line-height:18px;">4</div>
<div class="c r" style="left:482px;width:62px;top:771px;height:17px;line-height:18px;">9</div>
<div class="c r" style="left:546px;width:62px;top:771px;height:17px;line-height:18px;">6</div>
<div class="c nik" style="left:614px;top:771px;height:17px;line-height:18px;">3217120406980002</div>
<i class="tri" style="left:611px;top:771px"></i>
<div class="c" style="left:744px;top:771px;height:17px;line-height:18px;">TMI</div>
<div class="c" style="left:808px;top:771px;height:17px;line-height:18px;">TK/0</div>
<div class="c r" style="left:869px;width:115px;top:771px;height:17px;line-height:18px">1.482.400,00</div>
<div class="c r" style="left:990px;width:77px;top:771px;height:17px;line-height:18px">-</div>
<div class="c r" style="left:1087px;width:91px;top:771px;height:17px;line-height:18px">170.580,74</div>
<div class="c r" style="left:1184px;width:77px;top:771px;height:17px;line-height:18px">-</div>
<div class="c r" style="left:1281px;width:136px;top:771px;height:17px;line-height:18px">1.652.980,74</div>
<div class="c r" style="left:1423px;width:77px;top:771px;height:17px;line-height:18px">-</div>
<div class="c r" style="left:1520px;width:77px;top:771px;height:17px;line-height:18px">-</div>
<div class="c r" style="left:1617px;width:91px;top:771px;height:17px;line-height:18px">112.718,55</div>
<div class="c r" style="left:1714px;width:116px;top:771px;height:17px;line-height:18px">2.616.000,00</div>
<div class="c r" style="left:1836px;width:77px;top:771px;height:17px;line-height:18px">-</div>
<div class="c ctr" style="left:135px;width:64px;top:789px;height:21px;line-height:22px;">88</div>
<div class="c" style="left:200.5px;top:789px;height:21px;line-height:22px;">Farid Gunawan</div>
<div class="c r" style="left:418px;width:62px;top:789px;height:21px;line-height:22px;">4</div>
<div class="c r" style="left:482px;width:62px;top:789px;height:21px;line-height:22px;">7</div>
<div class="c r" style="left:546px;width:62px;top:789px;height:21px;line-height:22px;">4</div>
<div class="c nik" style="left:614px;top:789px;height:21px;line-height:22px;">3215130712970001</div>
<i class="tri" style="left:611px;top:788px"></i>
<div class="c" style="left:744px;top:789px;height:21px;line-height:22px;">TMI</div>
<div class="c" style="left:808px;top:789px;height:21px;line-height:22px;">TK/0</div>
<div class="c r" style="left:869px;width:115px;top:789px;height:21px;line-height:22px">5.576.900,00</div>
<div class="c r" style="left:990px;width:77px;top:789px;height:21px;line-height:22px">-</div>
<div class="c r" style="left:1087px;width:91px;top:789px;height:21px;line-height:22px">245.012,95</div>
<div class="c r" style="left:1184px;width:77px;top:789px;height:21px;line-height:22px">-</div>
<div class="c r" style="left:1281px;width:136px;top:789px;height:21px;line-height:22px">5.821.912,95</div>
<div class="c r" style="left:1423px;width:91px;top:789px;height:21px;line-height:22px">0,01</div>
<div class="c r" style="left:1520px;width:91px;top:789px;height:21px;line-height:22px">29.110,00</div>
<div class="c r" style="left:1617px;width:91px;top:789px;height:21px;line-height:22px">161.902,83</div>
<div class="c r" style="left:1714px;width:116px;top:789px;height:21px;line-height:22px">5.397.000,00</div>
<div class="c r" style="left:1836px;width:91px;top:789px;height:21px;line-height:22px">300.000,00</div>
<div class="c ctr" style="left:135px;width:64px;top:809px;height:17px;line-height:18px;">89</div>
<div class="c" style="left:200.5px;top:809px;height:17px;line-height:18px;">Iqbal Fajar Ramadhan</div>
<div class="c r" style="left:418px;width:62px;top:809px;height:17px;line-height:18px;">2</div>
<div class="c r" style="left:482px;width:62px;top:809px;height:17px;line-height:18px;">11</div>
<div class="c r" style="left:546px;width:62px;top:809px;height:17px;line-height:18px;">10</div>
<div class="c nik" style="left:614px;top:809px;height:17px;line-height:18px;">1871060602960007</div>
<i class="tri" style="left:611px;top:809px"></i>
<div class="c" style="left:744px;top:809px;height:17px;line-height:18px;">TMI</div>
<div class="c" style="left:808px;top:809px;height:17px;line-height:18px;">K/0</div>
<div class="c r" style="left:869px;width:115px;top:809px;height:17px;line-height:18px">3.432.000,00</div>
<div class="c r" style="left:990px;width:77px;top:809px;height:17px;line-height:18px">-</div>
<div class="c r" style="left:1087px;width:91px;top:809px;height:17px;line-height:18px">26.466,03</div>
<div class="c r" style="left:1184px;width:77px;top:809px;height:17px;line-height:18px">-</div>
<div class="c r" style="left:1281px;width:136px;top:809px;height:17px;line-height:18px">3.458.466,03</div>
<div class="c r" style="left:1423px;width:77px;top:809px;height:17px;line-height:18px">-</div>
<div class="c r" style="left:1520px;width:77px;top:809px;height:17px;line-height:18px">-</div>
<div class="c r" style="left:1617px;width:91px;top:809px;height:17px;line-height:18px">147.033,51</div>
<div class="c r" style="left:1714px;width:116px;top:809px;height:17px;line-height:18px">4.902.000,00</div>
<div class="c r" style="left:1836px;width:77px;top:809px;height:17px;line-height:18px">-</div>
<div class="c ctr" style="left:135px;width:64px;top:827px;height:21px;line-height:22px;">90</div>
<div class="c" style="left:200.5px;top:827px;height:21px;line-height:22px;">Gita Apriyanti</div>
<div class="c r" style="left:418px;width:62px;top:827px;height:21px;line-height:22px;">3</div>
<div class="c r" style="left:482px;width:62px;top:827px;height:21px;line-height:22px;">9</div>
<div class="c r" style="left:546px;width:62px;top:827px;height:21px;line-height:22px;">7</div>
<div class="c nik" style="left:614px;top:827px;height:21px;line-height:22px;">3172025904930003</div>
<i class="tri" style="left:611px;top:826px"></i>
<div class="c" style="left:744px;top:827px;height:21px;line-height:22px;">TMI</div>
<div class="c" style="left:808px;top:827px;height:21px;line-height:22px;">TK/0</div>
<div class="c r" style="left:869px;width:115px;top:827px;height:21px;line-height:22px">3.778.000,00</div>
<div class="c r" style="left:990px;width:77px;top:827px;height:21px;line-height:22px">-</div>
<div class="c r" style="left:1087px;width:91px;top:827px;height:21px;line-height:22px">30.730,06</div>
<div class="c r" style="left:1184px;width:77px;top:827px;height:21px;line-height:22px">-</div>
<div class="c r" style="left:1281px;width:136px;top:827px;height:21px;line-height:22px">3.808.730,06</div>
<div class="c r" style="left:1423px;width:77px;top:827px;height:21px;line-height:22px">-</div>
<div class="c r" style="left:1520px;width:77px;top:827px;height:21px;line-height:22px">-</div>
<div class="c r" style="left:1617px;width:91px;top:827px;height:21px;line-height:22px">170.722,56</div>
<div class="c r" style="left:1714px;width:116px;top:827px;height:21px;line-height:22px">3.778.000,00</div>
<div class="c r" style="left:1836px;width:77px;top:827px;height:21px;line-height:22px">-</div>
<div class="c ctr" style="left:135px;width:64px;top:847px;height:17px;line-height:18px;">91</div>
<div class="c" style="left:200.5px;top:847px;height:17px;line-height:18px;">Aris Dwiyanto</div>
<div class="c r" style="left:418px;width:62px;top:847px;height:17px;line-height:18px;">3</div>
<div class="c r" style="left:482px;width:62px;top:847px;height:17px;line-height:18px;">9</div>
<div class="c r" style="left:546px;width:62px;top:847px;height:17px;line-height:18px;">7</div>
<div class="c nik" style="left:614px;top:847px;height:17px;line-height:18px;">3275012910960011</div>
<i class="tri" style="left:611px;top:847px"></i>
<div class="c" style="left:744px;top:847px;height:17px;line-height:18px;">TMI</div>
<div class="c" style="left:808px;top:847px;height:17px;line-height:18px;">K/1</div>
<div class="c r" style="left:869px;width:115px;top:847px;height:17px;line-height:18px">3.778.000,00</div>
<div class="c r" style="left:990px;width:77px;top:847px;height:17px;line-height:18px">-</div>
<div class="c r" style="left:1087px;width:91px;top:847px;height:17px;line-height:18px">258.360,14</div>
<div class="c r" style="left:1184px;width:77px;top:847px;height:17px;line-height:18px">-</div>
<div class="c r" style="left:1281px;width:136px;top:847px;height:17px;line-height:18px">4.036.360,14</div>
<div class="c r" style="left:1423px;width:77px;top:847px;height:17px;line-height:18px">-</div>
<div class="c r" style="left:1520px;width:77px;top:847px;height:17px;line-height:18px">-</div>
<div class="c r" style="left:1617px;width:91px;top:847px;height:17px;line-height:18px">170.722,56</div>
<div class="c r" style="left:1714px;width:116px;top:847px;height:17px;line-height:18px">3.778.000,00</div>
<div class="c r" style="left:1836px;width:77px;top:847px;height:17px;line-height:18px">-</div>
<div class="c ctr" style="left:135px;width:64px;top:865px;height:21px;line-height:22px;">92</div>
<div class="c" style="left:200.5px;top:865px;height:21px;line-height:22px;">Aris Kuncoro</div>
<div class="c r" style="left:418px;width:62px;top:865px;height:21px;line-height:22px;">1</div>
<div class="c r" style="left:482px;width:62px;top:865px;height:21px;line-height:22px;">11</div>
<div class="c r" style="left:546px;width:62px;top:865px;height:21px;line-height:22px;">11</div>
<div class="c nik" style="left:614px;top:865px;height:21px;line-height:22px;">1607051101870001</div>
<i class="tri" style="left:611px;top:864px"></i>
<div class="c" style="left:744px;top:865px;height:21px;line-height:22px;">TMI</div>
<div class="c" style="left:808px;top:865px;height:21px;line-height:22px;">K/2</div>
<div class="c r" style="left:869px;width:115px;top:865px;height:21px;line-height:22px">3.917.000,00</div>
<div class="c r" style="left:990px;width:91px;top:865px;height:21px;line-height:22px">1.100.500,00</div>
<div class="c r" style="left:1087px;width:91px;top:865px;height:21px;line-height:22px">21.149,83</div>
<div class="c r" style="left:1184px;width:77px;top:865px;height:21px;line-height:22px">-</div>
<div class="c r" style="left:1281px;width:136px;top:865px;height:21px;line-height:22px">5.038.649,83</div>
<div class="c r" style="left:1423px;width:77px;top:865px;height:21px;line-height:22px">-</div>
<div class="c r" style="left:1520px;width:77px;top:865px;height:21px;line-height:22px">-</div>
<div class="c r" style="left:1617px;width:91px;top:865px;height:21px;line-height:22px">117.499,05</div>
<div class="c r" style="left:1714px;width:116px;top:865px;height:21px;line-height:22px">3.917.000,00</div>
<div class="c r" style="left:1836px;width:91px;top:865px;height:21px;line-height:22px">2.120.000,00</div>
<div class="c ctr" style="left:135px;width:64px;top:885px;height:17px;line-height:18px;">93</div>
<div class="c" style="left:200.5px;top:885px;height:17px;line-height:18px;">Ita Yulianti</div>
<div class="c r" style="left:418px;width:62px;top:885px;height:17px;line-height:18px;">4</div>
<div class="c r" style="left:482px;width:62px;top:885px;height:17px;line-height:18px;">7</div>
<div class="c r" style="left:546px;width:62px;top:885px;height:17px;line-height:18px;">4</div>
<div class="c nik" style="left:614px;top:885px;height:17px;line-height:18px;">3216154401930002</div>
<i class="tri" style="left:611px;top:885px"></i>
<div class="c" style="left:744px;top:885px;height:17px;line-height:18px;">TMI</div>
<div class="c" style="left:808px;top:885px;height:17px;line-height:18px;">TK/0</div>
<div class="c r" style="left:869px;width:115px;top:885px;height:17px;line-height:18px">2.140.866,67</div>
<div class="c r" style="left:990px;width:77px;top:885px;height:17px;line-height:18px">-</div>
<div class="c r" style="left:1087px;width:91px;top:885px;height:17px;line-height:18px">258.360,14</div>
<div class="c r" style="left:1184px;width:77px;top:885px;height:17px;line-height:18px">-</div>
<div class="c r" style="left:1281px;width:136px;top:885px;height:17px;line-height:18px">2.399.226,81</div>
<div class="c r" style="left:1423px;width:77px;top:885px;height:17px;line-height:18px">-</div>
<div class="c r" style="left:1520px;width:77px;top:885px;height:17px;line-height:18px">-</div>
<div class="c r" style="left:1617px;width:91px;top:885px;height:17px;line-height:18px">170.722,56</div>
<div class="c r" style="left:1714px;width:116px;top:885px;height:17px;line-height:18px">3.778.000,00</div>
<div class="c r" style="left:1836px;width:91px;top:885px;height:17px;line-height:18px">2.439.000,00</div>
<div class="c ctr" style="left:135px;width:64px;top:903px;height:21px;line-height:22px;">104</div>
<div class="c" style="left:200.5px;top:903px;height:21px;line-height:22px;">Yudha Manggala Alaondo</div>
<div class="c r" style="left:418px;width:62px;top:903px;height:21px;line-height:22px;">1</div>
<div class="c r" style="left:482px;width:62px;top:903px;height:21px;line-height:22px;">11</div>
<div class="c r" style="left:546px;width:62px;top:903px;height:21px;line-height:22px;">11</div>
<div class="c nik" style="left:614px;top:903px;height:21px;line-height:22px;">3216053008960004</div>
<i class="tri" style="left:611px;top:902px"></i>
<div class="c" style="left:744px;top:903px;height:21px;line-height:22px;">TMI</div>
<div class="c" style="left:808px;top:903px;height:21px;line-height:22px;">K/2</div>
<div class="c r" style="left:869px;width:101px;top:903px;height:21px;line-height:22px">-</div>
<div class="c r" style="left:990px;width:77px;top:903px;height:21px;line-height:22px">-</div>
<div class="c r" style="left:1087px;width:77px;top:903px;height:21px;line-height:22px">-</div>
<div class="c r" style="left:1184px;width:77px;top:903px;height:21px;line-height:22px">-</div>
<div class="c r" style="left:1281px;width:122px;top:903px;height:21px;line-height:22px">-</div>
<div class="c r" style="left:1423px;width:77px;top:903px;height:21px;line-height:22px">-</div>
<div class="c r" style="left:1520px;width:77px;top:903px;height:21px;line-height:22px">-</div>
<div class="c r" style="left:1617px;width:77px;top:903px;height:21px;line-height:22px">-</div>
<div class="c r" style="left:1714px;width:102px;top:903px;height:21px;line-height:22px">-</div>
<div class="c r" style="left:1836px;width:77px;top:903px;height:21px;line-height:22px">-</div>
<div class="c ctr" style="left:135px;width:64px;top:924px;height:21px;line-height:22px;">106</div>
<div class="c" style="left:200.5px;top:924px;height:21px;line-height:22px;">Yunan Alpayed</div>
<div class="c r" style="left:418px;width:62px;top:924px;height:21px;line-height:22px;">1</div>
<div class="c r" style="left:482px;width:62px;top:924px;height:21px;line-height:22px;">5</div>
<div class="c r" style="left:546px;width:62px;top:924px;height:21px;line-height:22px;">5</div>
<div class="c nik" style="left:614px;top:924px;height:21px;line-height:22px;">1671040912030005</div>
<i class="tri" style="left:611px;top:923px"></i>
<div class="c" style="left:744px;top:924px;height:21px;line-height:22px;">TMI</div>
<div class="c" style="left:808px;top:924px;height:21px;line-height:22px;">K/1</div>
<div class="c r" style="left:869px;width:115px;top:924px;height:21px;line-height:22px">3.917.000,00</div>
<div class="c r" style="left:990px;width:91px;top:924px;height:21px;line-height:22px">1.305.000,00</div>
<div class="c r" style="left:1087px;width:91px;top:924px;height:21px;line-height:22px">21.149,83</div>
<div class="c r" style="left:1184px;width:77px;top:924px;height:21px;line-height:22px">-</div>
<div class="c r" style="left:1281px;width:136px;top:924px;height:21px;line-height:22px">5.243.149,83</div>
<div class="c r" style="left:1423px;width:77px;top:924px;height:21px;line-height:22px">-</div>
<div class="c r" style="left:1520px;width:77px;top:924px;height:21px;line-height:22px">-</div>
<div class="c r" style="left:1617px;width:91px;top:924px;height:21px;line-height:22px">117.499,05</div>
<div class="c r" style="left:1714px;width:116px;top:924px;height:21px;line-height:22px">3.917.000,00</div>
<div class="c r" style="left:1836px;width:91px;top:924px;height:21px;line-height:22px">1.045.000,00</div>
<div class="c ctr" style="left:135px;width:64px;top:944px;height:17px;line-height:18px;">107</div>
<div class="c" style="left:200.5px;top:944px;height:17px;line-height:18px;">Muhammad Aziz</div>
<div class="c r" style="left:418px;width:62px;top:944px;height:17px;line-height:18px;">1</div>
<div class="c r" style="left:482px;width:62px;top:944px;height:17px;line-height:18px;">4</div>
<div class="c r" style="left:546px;width:62px;top:944px;height:17px;line-height:18px;">4</div>
<div class="c nik" style="left:614px;top:944px;height:17px;line-height:18px;">1610052101010003</div>
<i class="tri" style="left:611px;top:944px"></i>
<div class="c" style="left:744px;top:944px;height:17px;line-height:18px;">TMI</div>
<div class="c" style="left:808px;top:944px;height:17px;line-height:18px;">TK/0</div>
<div class="c r" style="left:869px;width:115px;top:944px;height:17px;line-height:18px">3.917.000,00</div>
<div class="c r" style="left:990px;width:91px;top:944px;height:17px;line-height:18px">300.000,00</div>
<div class="c r" style="left:1087px;width:91px;top:944px;height:17px;line-height:18px">177.815,23</div>
<div class="c r" style="left:1184px;width:77px;top:944px;height:17px;line-height:18px">-</div>
<div class="c r" style="left:1281px;width:136px;top:944px;height:17px;line-height:18px">4.394.815,23</div>
<div class="c r" style="left:1423px;width:77px;top:944px;height:17px;line-height:18px">-</div>
<div class="c r" style="left:1520px;width:77px;top:944px;height:17px;line-height:18px">-</div>
<div class="c r" style="left:1617px;width:91px;top:944px;height:17px;line-height:18px">117.499,05</div>
<div class="c r" style="left:1714px;width:102px;top:944px;height:17px;line-height:18px">-</div>
<div class="c r" style="left:1836px;width:77px;top:944px;height:17px;line-height:18px">-</div>
<div class="c ctr" style="left:135px;width:64px;top:961px;height:17px;line-height:18px;">111</div>
<div class="c" style="left:200.5px;top:961px;height:17px;line-height:18px;">Muhammad Satria Pratama Putra</div>
<div class="c r" style="left:418px;width:62px;top:961px;height:17px;line-height:18px;">1</div>
<div class="c r" style="left:482px;width:62px;top:961px;height:17px;line-height:18px;">5</div>
<div class="c r" style="left:546px;width:62px;top:961px;height:17px;line-height:18px;">5</div>
<div class="c nik" style="left:614px;top:961px;height:17px;line-height:18px;">1610050609020002</div>
<i class="tri" style="left:611px;top:961px"></i>
<div class="c" style="left:744px;top:961px;height:17px;line-height:18px;">TMI</div>
<div class="c" style="left:808px;top:961px;height:17px;line-height:18px;">TK/0</div>
<div class="c r" style="left:869px;width:115px;top:961px;height:17px;line-height:18px">3.917.000,00</div>
<div class="c r" style="left:990px;width:91px;top:961px;height:17px;line-height:18px">300.000,00</div>
<div class="c r" style="left:1087px;width:91px;top:961px;height:17px;line-height:18px">177.815,23</div>
<div class="c r" style="left:1184px;width:77px;top:961px;height:17px;line-height:18px">-</div>
<div class="c r" style="left:1281px;width:136px;top:961px;height:17px;line-height:18px">4.394.815,23</div>
<div class="c r" style="left:1423px;width:77px;top:961px;height:17px;line-height:18px">-</div>
<div class="c r" style="left:1520px;width:77px;top:961px;height:17px;line-height:18px">-</div>
<div class="c r" style="left:1617px;width:91px;top:961px;height:17px;line-height:18px">117.499,05</div>
<div class="c r" style="left:1714px;width:116px;top:961px;height:17px;line-height:18px">3.917.000,00</div>
<div class="c r" style="left:1836px;width:91px;top:961px;height:17px;line-height:18px">1.135.000,00</div>
<div id="sel"></div><i id="selh"></i>
</div>
<div class="a" style="left:0;top:257px;width:1898px;height:18px;background:linear-gradient(#1a1614,#0d0d0d 4px)"></div>
<div class="a" style="left:0;top:275px;width:25px;height:703px;background:#0e0e0e"></div>
<svg class="a" style="left:13px;top:262px" width="10" height="10" viewBox="0 0 10 10"><path d="M9.500 .500v9h-9z" fill="#5d5d5d"/></svg>
<div class="ch" style="left:49.5px;top:260px">A</div>
<div class="ch" style="left:136.0px;top:260px">B</div>
<i class="a" style="left:134px;top:258px;width:1px;height:17px;background:#5a5a5a"></i>
<div class="ch" style="left:278.0px;top:260px">C</div>
<i class="a" style="left:198px;top:258px;width:1px;height:17px;background:#5a5a5a"></i>
<div class="ch" style="left:420.0px;top:260px">D</div>
<i class="a" style="left:418px;top:258px;width:1px;height:17px;background:#5a5a5a"></i>
<div class="ch" style="left:484.0px;top:260px">E</div>
<i class="a" style="left:482px;top:258px;width:1px;height:17px;background:#5a5a5a"></i>
<div class="ch" style="left:548.0px;top:260px">F</div>
<i class="a" style="left:546px;top:258px;width:1px;height:17px;background:#5a5a5a"></i>
<div class="ch" style="left:645.5px;top:260px">G</div>
<i class="a" style="left:610px;top:258px;width:1px;height:17px;background:#5a5a5a"></i>
<div class="ch" style="left:743.0px;top:260px">H</div>
<i class="a" style="left:741px;top:258px;width:1px;height:17px;background:#5a5a5a"></i>
<div class="ch" style="left:807.0px;top:260px">I</div>
<i class="a" style="left:805px;top:258px;width:1px;height:17px;background:#5a5a5a"></i>
<div class="ch" style="left:899.5px;top:260px">AI</div>
<i class="a" style="left:869px;top:258px;width:1px;height:17px;background:#5a5a5a"></i>
<div class="ch" style="left:1008.5px;top:260px">AJ</div>
<i class="a" style="left:990px;top:258px;width:1px;height:17px;background:#5a5a5a"></i>
<div class="ch" style="left:1105.5px;top:260px">AK</div>
<i class="a" style="left:1087px;top:258px;width:1px;height:17px;background:#5a5a5a"></i>
<div class="ch" style="left:1202.5px;top:260px">AL</div>
<i class="a" style="left:1184px;top:258px;width:1px;height:17px;background:#5a5a5a"></i>
<div class="a" style="left:1281px;top:259px;width:142px;height:16px;background:#6c6c6c"></div>
<i class="a" style="left:1281px;top:273px;width:143px;height:2px;background:#1d8a4c"></i>
<div class="ch" style="left:1322.0px;top:260px">AM</div>
<i class="a" style="left:1281px;top:258px;width:1px;height:17px;background:#5a5a5a"></i>
<div class="ch" style="left:1441.5px;top:260px">AN</div>
<i class="a" style="left:1423px;top:258px;width:1px;height:17px;background:#5a5a5a"></i>
<div class="ch" style="left:1538.5px;top:260px">AO</div>
<i class="a" style="left:1520px;top:258px;width:1px;height:17px;background:#5a5a5a"></i>
<div class="ch" style="left:1635.5px;top:260px">AP</div>
<i class="a" style="left:1617px;top:258px;width:1px;height:17px;background:#5a5a5a"></i>
<div class="ch" style="left:1745.0px;top:260px">AQ</div>
<i class="a" style="left:1714px;top:258px;width:1px;height:17px;background:#5a5a5a"></i>
<div class="ch" style="left:1855px;top:260px">AR</div>
<i class="a" style="left:1836px;top:258px;width:1px;height:17px;background:#5a5a5a"></i>
<i class="a" style="left:25px;top:258px;width:1px;height:17px;background:#8a8a8a"></i>
<i class="a" style="left:867px;top:261px;width:1px;height:14px;background:#9a9a9a"></i>
<i class="a" style="left:869px;top:261px;width:1px;height:14px;background:#9a9a9a"></i>
<div class="rh" style="top:277px;color:#f2f2f2">1</div>
<div class="rh" style="top:294px;color:#f2f2f2">2</div>
<i class="a" style="left:0;top:292px;width:25px;height:1px;background:#9a9a9a"></i>
<div class="a" style="left:0;top:309px;width:25px;height:38px;background:#6c6c6c"></div>
<i class="a" style="left:24px;top:309px;width:2px;height:39px;background:#1d8a4c"></i>
<div class="rh" style="top:332px;color:#f2f2f2">3</div>
<i class="a" style="left:0;top:309px;width:25px;height:1px;background:#9a9a9a"></i>
<div class="rh" style="top:370px;color:#f2f2f2">4</div>
<i class="a" style="left:0;top:347px;width:25px;height:1px;background:#9a9a9a"></i>
<div class="rh" style="top:434px;color:#f2f2f2">5</div>
<i class="a" style="left:0;top:385px;width:25px;height:1px;background:#9a9a9a"></i>
<div class="rh" style="top:451px;height:21px;line-height:22px;color:#a6e4de">6</div>
<i class="a" style="left:0;top:449px;width:25px;height:1px;background:#9a9a9a"></i>
<div class="rh" style="top:472px;height:21px;line-height:22px;color:#a6e4de">16</div>
<i class="a" style="left:0;top:469px;width:25px;height:1px;background:#5e5e5e"></i>
<i class="a" style="left:0;top:472px;width:25px;height:1px;background:#5e5e5e"></i>
<div class="rh" style="top:492px;height:17px;line-height:18px;color:#a6e4de">33</div>
<i class="a" style="left:0;top:490px;width:25px;height:1px;background:#5e5e5e"></i>
<i class="a" style="left:0;top:493px;width:25px;height:1px;background:#5e5e5e"></i>
<div class="rh" style="top:509px;height:17px;line-height:18px;color:#a6e4de">35</div>
<i class="a" style="left:0;top:507px;width:25px;height:1px;background:#5e5e5e"></i>
<i class="a" style="left:0;top:510px;width:25px;height:1px;background:#5e5e5e"></i>
<div class="rh" style="top:527px;height:21px;line-height:22px;color:#a6e4de">36</div>
<i class="a" style="left:0;top:524px;width:25px;height:1px;background:#5e5e5e"></i>
<i class="a" style="left:0;top:527px;width:25px;height:1px;background:#5e5e5e"></i>
<div class="rh" style="top:547px;height:17px;line-height:18px;color:#a6e4de">37</div>
<i class="a" style="left:0;top:545px;width:25px;height:1px;background:#5e5e5e"></i>
<i class="a" style="left:0;top:548px;width:25px;height:1px;background:#5e5e5e"></i>
<div class="rh" style="top:565px;height:21px;line-height:22px;color:#a6e4de">38</div>
<i class="a" style="left:0;top:562px;width:25px;height:1px;background:#5e5e5e"></i>
<i class="a" style="left:0;top:565px;width:25px;height:1px;background:#5e5e5e"></i>
<div class="rh" style="top:585px;height:17px;line-height:18px;color:#a6e4de">43</div>
<i class="a" style="left:0;top:583px;width:25px;height:1px;background:#5e5e5e"></i>
<i class="a" style="left:0;top:586px;width:25px;height:1px;background:#5e5e5e"></i>
<div class="rh" style="top:602px;height:17px;line-height:18px;color:#a6e4de">47</div>
<i class="a" style="left:0;top:600px;width:25px;height:1px;background:#5e5e5e"></i>
<i class="a" style="left:0;top:603px;width:25px;height:1px;background:#5e5e5e"></i>
<div class="rh" style="top:620px;height:21px;line-height:22px;color:#a6e4de">54</div>
<i class="a" style="left:0;top:617px;width:25px;height:1px;background:#5e5e5e"></i>
<i class="a" style="left:0;top:620px;width:25px;height:1px;background:#5e5e5e"></i>
<div class="rh" style="top:640px;height:17px;line-height:18px;color:#a6e4de">61</div>
<i class="a" style="left:0;top:638px;width:25px;height:1px;background:#5e5e5e"></i>
<i class="a" style="left:0;top:641px;width:25px;height:1px;background:#5e5e5e"></i>
<div class="rh" style="top:657px;height:17px;line-height:18px;color:#a6e4de">69</div>
<i class="a" style="left:0;top:655px;width:25px;height:1px;background:#5e5e5e"></i>
<i class="a" style="left:0;top:658px;width:25px;height:1px;background:#5e5e5e"></i>
<div class="rh" style="top:675px;height:21px;line-height:22px;color:#a6e4de">72</div>
<i class="a" style="left:0;top:672px;width:25px;height:1px;background:#5e5e5e"></i>
<i class="a" style="left:0;top:675px;width:25px;height:1px;background:#5e5e5e"></i>
<div class="rh" style="top:696px;height:21px;line-height:22px;color:#a6e4de">74</div>
<i class="a" style="left:0;top:693px;width:25px;height:1px;background:#5e5e5e"></i>
<i class="a" style="left:0;top:696px;width:25px;height:1px;background:#5e5e5e"></i>
<div class="rh" style="top:716px;height:17px;line-height:18px;color:#a6e4de">85</div>
<i class="a" style="left:0;top:714px;width:25px;height:1px;background:#5e5e5e"></i>
<i class="a" style="left:0;top:717px;width:25px;height:1px;background:#5e5e5e"></i>
<div class="rh" style="top:734px;height:21px;line-height:22px;color:#a6e4de">86</div>
<i class="a" style="left:0;top:731px;width:25px;height:1px;background:#5e5e5e"></i>
<i class="a" style="left:0;top:734px;width:25px;height:1px;background:#5e5e5e"></i>
<div class="rh" style="top:754px;height:17px;line-height:18px;color:#a6e4de">87</div>
<i class="a" style="left:0;top:752px;width:25px;height:1px;background:#5e5e5e"></i>
<i class="a" style="left:0;top:755px;width:25px;height:1px;background:#5e5e5e"></i>
<div class="rh" style="top:771px;height:17px;line-height:18px;color:#a6e4de">89</div>
<i class="a" style="left:0;top:769px;width:25px;height:1px;background:#5e5e5e"></i>
<i class="a" style="left:0;top:772px;width:25px;height:1px;background:#5e5e5e"></i>
<div class="rh" style="top:789px;height:21px;line-height:22px;color:#a6e4de">92</div>
<i class="a" style="left:0;top:786px;width:25px;height:1px;background:#5e5e5e"></i>
<i class="a" style="left:0;top:789px;width:25px;height:1px;background:#5e5e5e"></i>
<div class="rh" style="top:809px;height:17px;line-height:18px;color:#a6e4de">93</div>
<i class="a" style="left:0;top:807px;width:25px;height:1px;background:#5e5e5e"></i>
<i class="a" style="left:0;top:810px;width:25px;height:1px;background:#5e5e5e"></i>
<div class="rh" style="top:827px;height:21px;line-height:22px;color:#a6e4de">94</div>
<i class="a" style="left:0;top:824px;width:25px;height:1px;background:#5e5e5e"></i>
<i class="a" style="left:0;top:827px;width:25px;height:1px;background:#5e5e5e"></i>
<div class="rh" style="top:847px;height:17px;line-height:18px;color:#a6e4de">95</div>
<i class="a" style="left:0;top:845px;width:25px;height:1px;background:#5e5e5e"></i>
<i class="a" style="left:0;top:848px;width:25px;height:1px;background:#5e5e5e"></i>
<div class="rh" style="top:865px;height:21px;line-height:22px;color:#a6e4de">96</div>
<i class="a" style="left:0;top:862px;width:25px;height:1px;background:#5e5e5e"></i>
<i class="a" style="left:0;top:865px;width:25px;height:1px;background:#5e5e5e"></i>
<div class="rh" style="top:885px;height:17px;line-height:18px;color:#a6e4de">97</div>
<i class="a" style="left:0;top:883px;width:25px;height:1px;background:#5e5e5e"></i>
<i class="a" style="left:0;top:886px;width:25px;height:1px;background:#5e5e5e"></i>
<div class="rh" style="top:903px;height:21px;line-height:22px;color:#a6e4de">108</div>
<i class="a" style="left:0;top:900px;width:25px;height:1px;background:#5e5e5e"></i>
<i class="a" style="left:0;top:903px;width:25px;height:1px;background:#5e5e5e"></i>
<div class="rh" style="top:924px;height:21px;line-height:22px;color:#a6e4de">110</div>
<i class="a" style="left:0;top:921px;width:25px;height:1px;background:#5e5e5e"></i>
<i class="a" style="left:0;top:924px;width:25px;height:1px;background:#5e5e5e"></i>
<div class="rh" style="top:944px;height:17px;line-height:18px;color:#a6e4de">111</div>
<i class="a" style="left:0;top:942px;width:25px;height:1px;background:#5e5e5e"></i>
<i class="a" style="left:0;top:945px;width:25px;height:1px;background:#5e5e5e"></i>
<div class="rh" style="top:961px;height:17px;line-height:18px;color:#a6e4de">115</div>
<i class="a" style="left:0;top:959px;width:25px;height:1px;background:#5e5e5e"></i>
<i class="a" style="left:0;top:962px;width:25px;height:1px;background:#5e5e5e"></i>
<div class="a" style="left:1898px;top:259px;width:22px;height:719px;background:#161514"></div>
<svg class="a" style="left:1903.5px;top:262px" width="12" height="8" viewBox="0 0 12 8"><path d="M6 1 11 7H1z" fill="#a0a0a0"/></svg>
<div class="a" style="left:1905px;top:275px;width:9px;height:372px;background:#9d9d9d;border-radius:4.500px"></div>
<svg class="a" style="left:1903.5px;top:966px" width="12" height="8" viewBox="0 0 12 8"><path d="M6 7 11 1H1z" fill="#a0a0a0"/></svg>
<div id="tabbar"></div>
<svg class="a" style="left:27px;top:987px" width="8" height="12" viewBox="0 0 8 12"><path d="M6.500 1 1.500 6l5 5" fill="none" stroke="#bdbdbd" stroke-width="1.300"/></svg>
<svg class="a" style="left:60px;top:987px" width="8" height="12" viewBox="0 0 8 12"><path d="M1.500 1 6.500 6l-5 5" fill="none" stroke="#8d8d8d" stroke-width="1.300"/></svg>
<i class="a" style="left:90px;top:992px;width:3px;height:3px;background:#ddd;box-shadow:4px 0 #ddd,8px 0 #ddd"></i>
<div class="t" style="left:123px;top:984.3px;font-size:14.3px;line-height:20px;color:#fff;letter-spacing:-1.07px;">11. RESIGN</div>
<div class="t" style="left:216px;top:984.3px;font-size:14.3px;line-height:20px;color:#fff;letter-spacing:-0.82px;">12. GAJI CBN</div>
<div class="t" style="left:323px;top:984.3px;font-size:14.3px;line-height:20px;color:#fff;letter-spacing:-1.01px;">12. INSENTIF PERFORMANCE</div>
<div class="t" style="left:531px;top:984.3px;font-size:14.3px;line-height:20px;color:#fff;letter-spacing:-1.06px;">12. INSENTIF SALES</div>
<div class="t" style="left:679px;top:984.3px;font-size:14.3px;line-height:20px;color:#fff;letter-spacing:-0.76px;">12. GAJI CBN (DATA BARU)</div>
<i class="a" style="left:203px;top:985px;width:1px;height:16px;background:#5a5654"></i>
<i class="a" style="left:309px;top:985px;width:1px;height:16px;background:#5a5654"></i>
<i class="a" style="left:517px;top:985px;width:1px;height:16px;background:#5a5654"></i>
<i class="a" style="left:664px;top:985px;width:1px;height:16px;background:#5a5654"></i>
<i class="a" style="left:860px;top:985px;width:1px;height:16px;background:#5a5654"></i>
<i class="a" style="left:1337px;top:985px;width:1px;height:16px;background:#5a5654"></i>
<i class="a" style="left:1432px;top:985px;width:1px;height:16px;background:#5a5654"></i>
<i class="a" style="left:1527px;top:985px;width:1px;height:16px;background:#5a5654"></i>
<i class="a" style="left:1607px;top:985px;width:1px;height:16px;background:#5a5654"></i>
<div class="a" style="left:865px;top:978px;width:201px;height:28px;background:linear-gradient(#fbfdf9,#e2f0dc);border-radius:5px 5px 4px 4px"></div>
<div class="t" style="left:873px;top:980.8px;font-size:14.3px;line-height:20px;color:#1e4d2d;letter-spacing:-0.61px;-webkit-text-stroke:0.3px #1e4d2d;">JAN - DESEMBER FINAL 2025</div>
<i class="a" style="left:873px;top:1001px;width:185px;height:2px;background:#1d7a3e"></i>
<div class="a" style="left:1075px;top:982px;width:256px;height:24px;background:#90d04e;border-radius:4px"></div>
<div class="t" style="left:1086px;top:984.3px;font-size:14.3px;line-height:20px;color:#1c3a10;letter-spacing:-0.91px;">JAN - DESEMBER PPH SETAHUN FINA</div>
<div class="t" style="left:1350px;top:984.3px;font-size:14.3px;line-height:20px;color:#fff;letter-spacing:-0.08px;">validasi nik</div>
<div class="t" style="left:1445px;top:984.3px;font-size:14.3px;line-height:20px;color:#fff;letter-spacing:-0.45px;">12. Coretax</div>
<div class="t" style="left:1541px;top:984.3px;font-size:14.3px;line-height:20px;color:#fff;letter-spacing:-0.60px;">JAN-MEI</div>
<svg class="a" style="left:1649px;top:988px" width="12" height="12" viewBox="0 0 12 12"><path d="M6 .500v11M.500 6h11" stroke="#e0e0e0" stroke-width="1.200"/></svg>
<i class="a" style="left:1706px;top:990px;width:2px;height:2px;background:#ddd;box-shadow:0 4px #ddd,0 8px #ddd"></i>
<svg class="a" style="left:1727px;top:988px" width="8" height="10" viewBox="0 0 8 10"><path d="M7 .500v9L1 5z" fill="#9a9a9a"/></svg>
<div class="a" style="left:1760px;top:989px;width:18px;height:9px;border-radius:4.500px;background:#9d9d9d"></div>
<svg class="a" style="left:1886px;top:988px" width="8" height="10" viewBox="0 0 8 10"><path d="M1 .500v9L7 5z" fill="#9a9a9a"/></svg>
<div id="statusbar"></div>
<div class="t" style="left:11px;top:1013.5px;font-size:11.5px;line-height:16px;color:#fff;letter-spacing:-0.16px;">Select destination and press ENTER or choose Paste</div>
<div class="a" style="left:1619px;top:1011px;width:40px;height:21px;background:#26221f"></div>
<svg class="a" style="left:1632px;top:1014px" width="14" height="14" viewBox="0 0 14 14"><rect x=".5" y=".5" width="12" height="12" fill="none" stroke="#e6e6e6" stroke-width="1"/><path d="M.500 4.500h12M.500 8.500h12M4.500 .500v12M8.500 .500v12" stroke="#e6e6e6" stroke-width="1"/></svg>
<svg class="a" style="left:1673px;top:1014px" width="14" height="14" viewBox="0 0 14 14"><rect x=".5" y=".5" width="12" height="12" fill="none" stroke="#e6e6e6" stroke-width="1"/><rect x="3" y="3" width="7" height="7" fill="none" stroke="#e6e6e6" stroke-width="1"/><path d="M4.500 5.500h4M4.500 7.500h4" stroke="#e6e6e6" stroke-width=".8"/></svg>
<svg class="a" style="left:1713px;top:1014px" width="14" height="14" viewBox="0 0 14 14"><rect x=".5" y=".5" width="12" height="12" fill="none" stroke="#e6e6e6" stroke-width="1"/><path d="M6.500 .500v6M.500 6.500h12" fill="none" stroke="#e6e6e6" stroke-width="1"/></svg>
<i class="a" style="left:1745px;top:1020px;width:8px;height:1px;background:#ddd"></i>
<i class="a" style="left:1759px;top:1020px;width:100px;height:1px;background:#8a8a8a"></i>
<i class="a" style="left:1807px;top:1015px;width:4px;height:11px;background:#c8c8c8"></i>
<svg class="a" style="left:1863px;top:1016px" width="9" height="9" viewBox="0 0 9 9"><path d="M4.500 .500v8M.500 4.500h8" stroke="#ddd" stroke-width="1.100"/></svg>
<div class="t" style="left:1885px;top:1013.0px;font-size:11.5px;line-height:16px;color:#fff;letter-spacing:-0.60px;">100%</div>
<div id="taskbar"></div>
<svg class="a" style="left:18px;top:1040px" width="26" height="30" viewBox="0 0 26 30"><path d="M1.500 17C2.500 11.500 6.500 8.500 11 8.500s8.500 3 9.500 8.500c-1.200-1-2.600-1-3.500 0-1-1-2.500-1-3.500 0-1-1-2.500-1-3.500 0-1-1-2.500-1-3.500 0-1-1-3.200-1-5 0z" fill="#8ec9f7"/><path d="M1.500 17c1.800-1 4-1 5 0 1-1 2.500-1 3.500 0 1-1 2.500-1 3.500 0 1-1 2.500-1 3.500 0 .900-1 2.300-1 3.500 0-.300-1.500-.800-2.800-1.500-3.800C13 12 7 12 3 13.200c-.700 1-1.200 2.300-1.500 3.800z" fill="#3f7fd0"/><path d="M10.500 17v7.500c0 1.800-3 1.800-3 0" fill="none" stroke="#a08c88" stroke-width="1.400"/></svg>
<div class="a" style="left:30px;top:1038.500px;width:16px;height:16px;border-radius:8px;background:#f5919a"></div>
<div class="t" style="left:35px;top:1039.3px;font-size:11px;line-height:15px;color:#7a0f1c;letter-spacing:-0.12px;">3</div>
<div class="t" style="left:50px;top:1040.3px;font-size:12px;line-height:17px;color:#fff;letter-spacing:-0.00px;">Hari hujan yang...</div>
<div class="t" style="left:50px;top:1056.5px;font-size:11.5px;line-height:16px;color:#d6d0cc;letter-spacing:-0.17px;">28°C</div>
<svg class="a" style="left:616px;top:1044px" width="25" height="25" viewBox="0 0 25 25"><defs><linearGradient id="wg" x1="0" y1="0" x2="1" y2="1"><stop offset="0" stop-color="#7fdcff"/><stop offset="1" stop-color="#1a9bf0"/></linearGradient></defs><rect x="0.500" y="0.500" width="11.300" height="11.300" rx="1" fill="url(#wg)"/><rect x="13" y="0.500" width="11.300" height="11.300" rx="1" fill="url(#wg)"/><rect x="0.500" y="13" width="11.300" height="11.300" rx="1" fill="url(#wg)"/><rect x="13" y="13" width="11.300" height="11.300" rx="1" fill="url(#wg)"/></svg>
<div class="a" style="left:653px;top:1040px;width:219px;height:32px;border-radius:16px;background:#3b3633;border-top:1px solid #4a4542;box-sizing:border-box"></div>
<svg class="a" style="left:664px;top:1048px" width="16" height="16" viewBox="0 0 16 16"><circle cx="6.500" cy="6.500" r="5" fill="none" stroke="#f0f0f0" stroke-width="1.500"/><path d="M10.200 10.200 14.500 14.500" stroke="#f0f0f0" stroke-width="1.600"/></svg>
<div class="t" style="left:690px;top:1046.5px;font-size:13.5px;line-height:19px;color:#cfcac6;letter-spacing:-0.30px;">Search</div>
<svg class="a" style="left:823px;top:1041px" width="46" height="30" viewBox="0 0 46 30"><ellipse cx="24" cy="27" rx="20" ry="2.800" fill="#d8c4a0"/><path d="M8 8.500c.500-2.500 2.500-4 4.500-3.500l2.500 4.500 12 .500c3 0 4.500 2 4.500 4.500l.500 11h-1.800l-1-7.500-2 7.500h-1.800l.500-8.500h-8.500l.500 8.500h-1.800l-1.500-7-1.500 7H13l.500-11.500-3-4L7 11z" fill="#cfc8de"/><path d="M13 6l2.500 6M16.500 10l1.500 6M20 10.500l1.500 6M23.500 10.500l1.500 6M27 11l1.500 5.500M30 12l1 4" stroke="#5b4f78" stroke-width="1.100"/></svg>
<svg class="a" style="left:885px;top:1043px" width="28" height="26" viewBox="0 0 28 26"><rect x="1" y="9" width="17" height="14" rx="2" fill="#6e6e6e"/><rect x="7" y="2" width="19" height="15" rx="2" fill="#e9e9e9"/></svg>
<svg class="a" style="left:929px;top:1042px" width="26" height="26" viewBox="0 0 26 26"><path d="M1 6a2 2 0 0 1 2-2h6l3 3h11a2 2 0 0 1 2 2v12a2 2 0 0 1-2 2H3a2 2 0 0 1-2-2z" fill="#f5b92e"/><path d="M1 10h24v11a2 2 0 0 1-2 2H3a2 2 0 0 1-2-2z" fill="#ffd75e"/><rect x="7" y="17" width="12" height="6" rx="1" fill="#2f7fd6"/></svg>
<i class="a" style="left:938px;top:1072px;width:6px;height:3px;border-radius:1.500px;background:#8c8885"></i>
<svg class="a" style="left:972px;top:1042px" width="26" height="26" viewBox="0 0 26 26"><defs><linearGradient id="eg" x1="0" y1="0" x2="1" y2="1"><stop offset="0" stop-color="#2fb7c4"/><stop offset=".55" stop-color="#1976d2"/><stop offset="1" stop-color="#0c4fa0"/></linearGradient><linearGradient id="eg2" x1="0" y1="1" x2="1" y2="0"><stop offset="0" stop-color="#2ba6d8"/><stop offset="1" stop-color="#6fdc6a"/></linearGradient></defs><circle cx="13" cy="13" r="12" fill="url(#eg)"/><path d="M1.500 11C3 4.500 8.500 1 14 1c6.500 0 11 4.500 11 10 0 3.500-2.500 5.500-5.500 5.500-2.500 0-4-1-4-2.500 0-1 1-1.500 1-3 0-2-2-3.500-4.500-3.500C7.500 7.500 3 9 1.500 11z" fill="url(#eg2)"/><path d="M9 13c-1.500 3.500.500 8.500 6 10-5 1.500-10-1-12-5 .500-3 3-5 6-5z" fill="#0d4f9e"/></svg>
<svg class="a" style="left:1016px;top:1042px" width="26" height="26" viewBox="0 0 26 26"><path d="M8 7V5a5 5 0 0 1 10 0v2" fill="none" stroke="#3aa0e8" stroke-width="1.800"/><rect x="2" y="7" width="22" height="17" rx="2.500" fill="#f4f4f4"/><rect x="8" y="11" width="4.500" height="4.500" fill="#f25022"/><rect x="13.500" y="11" width="4.500" height="4.500" fill="#7fba00"/><rect x="8" y="16.500" width="4.500" height="4.500" fill="#00a4ef"/><rect x="13.500" y="16.500" width="4.500" height="4.500" fill="#ffb900"/></svg>
<svg class="a" style="left:1060px;top:1042px" width="26" height="26" viewBox="0 0 26 26"><path d="M13 2.500a10.500 10.500 0 0 0-9 15.900L2.500 23.500l5.300-1.500A10.500 10.500 0 1 0 13 2.500z" fill="#1d2b22" stroke="#25d366" stroke-width="2.400" stroke-linejoin="round"/><path d="M9.300 8c.500-.500 1.300-.300 1.600.300l.700 1.600-1 1.300c.800 1.500 1.900 2.600 3.400 3.400l1.300-1 1.600.700c.600.300.800 1.100.300 1.600-1.100 1.300-2.700 1.400-4.700.400-2.300-1.200-4.100-3-5.200-5.200-.800-1.600-.300-2.500.900-3.100z" fill="#25d366"/></svg>
<svg class="a" style="left:1104px;top:1042px" width="26" height="26" viewBox="0 0 26 26"><circle cx="13" cy="13" r="12" fill="#ea4335"/><path d="M13 13 2.600 7A12 12 0 0 0 13 25l5.200-9z" fill="#34a853"/><path d="M13 13l5.200 3L13 25A12 12 0 0 0 23.400 7H13z" fill="#fbbc05"/><circle cx="13" cy="13" r="5.500" fill="#fff"/><circle cx="13" cy="13" r="4.300" fill="#4285f4"/></svg>
<i class="a" style="left:1114px;top:1072px;width:6px;height:3px;border-radius:1.500px;background:#8c8885"></i>
<svg class="a" style="left:1148px;top:1043px" width="26" height="26" viewBox="0 0 26 26"><circle cx="13" cy="13" r="12" fill="#e8344e"/><path d="M8 19 13 7l5 12" fill="none" stroke="#fff" stroke-width="2.200" stroke-linejoin="round"/></svg>
<svg class="a" style="left:1193px;top:1044px" width="24" height="24" viewBox="0 0 24 24"><rect x="0" y="0" width="24" height="24" rx="1.500" fill="#ef443b"/><path d="M9.500 7.500 14 12l-4.500 4.500L5 12z" fill="#fff"/><path d="M13.500 6 19.500 12l-6 6-1.700-1.700 4.300-4.300-4.300-4.300z" fill="#fff"/></svg>
<div class="a" style="left:1228px;top:1036px;width:40px;height:40px;border-radius:5px;background:#2a2623;border:1px solid #35302d;box-sizing:border-box"></div>
<svg class="a" style="left:1235px;top:1043px" width="26" height="26" viewBox="0 0 26 26"><rect x="6" y="1" width="19" height="23" rx="2.500" fill="#21a366"/><rect x="6" y="1" width="19" height="7.500" fill="#33c481"/><rect x="6" y="16.500" width="19" height="7.500" fill="#185c37"/><rect x="15.500" y="8.500" width="9.500" height="8" fill="#107c41"/><rect x="1" y="6.500" width="13" height="13" rx="1.500" fill="#107c41"/><path d="M4.500 9.500l6 7M10.500 9.500l-6 7" stroke="#fff" stroke-width="1.800"/></svg>
<i class="a" style="left:1241px;top:1072px;width:14px;height:3px;border-radius:1.500px;background:#57b5f0"></i>
<svg class="a" style="left:1280px;top:1042px" width="24" height="26" viewBox="0 0 24 26"><rect x="2" y="3" width="17" height="21" fill="#f2f2e6" stroke="#8bbf3a" stroke-width="1.500"/><rect x="2" y="3" width="17" height="4" fill="#8bbf3a"/><path d="M5 9v12M8 10v8M11 11h5M11 14h5M11 17h5" stroke="#333" stroke-width="1.100"/><path d="M21 2 12 15l-1 3 3-1 9-13z" fill="#e8c23a"/></svg>
<i class="a" style="left:1288px;top:1072px;width:6px;height:3px;border-radius:1.500px;background:#8c8885"></i>
<svg class="a" style="left:1696px;top:1051px" width="12" height="8" viewBox="0 0 12 8"><path d="M1 7 6 2l5 5" fill="none" stroke="#f0f0f0" stroke-width="1.400"/></svg>
<svg class="a" style="left:1724px;top:1047px" width="20" height="18" viewBox="0 0 20 18"><path d="M5 13.500a3.500 3.500 0 0 1 .5-7A5 5 0 0 1 15 7.500a3 3 0 0 1 0 6z" fill="#7a7674"/><path d="M2 2.500 17 16" stroke="#8a8684" stroke-width="1.300"/></svg>
<svg class="a" style="left:1756px;top:1046px" width="20" height="20" viewBox="0 0 20 20"><rect x="1" y="3" width="13" height="10" rx="1" fill="none" stroke="#f0f0f0" stroke-width="1.200"/><path d="M5 16.500h6M8 13v3.500" stroke="#f0f0f0" stroke-width="1.200"/><rect x="12.500" y="1" width="5" height="7" rx="1" fill="#221d1b" stroke="#f0f0f0" stroke-width="1.100"/><path d="M14.500 3h1" stroke="#f0f0f0" stroke-width="1"/></svg>
<svg class="a" style="left:1781px;top:1048px" width="18" height="16" viewBox="0 0 18 16"><path d="M1.500 5.500h3L8.500 2v12l-4-3.500h-3z" fill="none" stroke="#f0f0f0" stroke-width="1.200" stroke-linejoin="round"/><path d="M11 5.500c1 1.500 1 3.500 0 5M13.500 3.500c2 3 2 6 0 9" fill="none" stroke="#f0f0f0" stroke-width="1.100"/></svg>
<div class="t" style="left:1848px;top:1040.1px;font-size:12px;line-height:17px;color:#fff;letter-spacing:-0.21px;">11:12</div>
<div class="t" style="left:1815px;top:1056.1px;font-size:12px;line-height:17px;color:#fff;letter-spacing:0.19px;">31/01/2026</div>
<svg class="a" style="left:1885px;top:1048px" width="15" height="17" viewBox="0 0 15 17"><path d="M7.500 1.500a4.500 4.500 0 0 0-4.500 4.500v3.500L1.500 12.500h12L12 9.500V6a4.500 4.500 0 0 0-4.500-4.500zM5.500 13.500a2 2 0 0 0 4 0" fill="none" stroke="#f0f0f0" stroke-width="1.200"/></svg>
</body></html>
